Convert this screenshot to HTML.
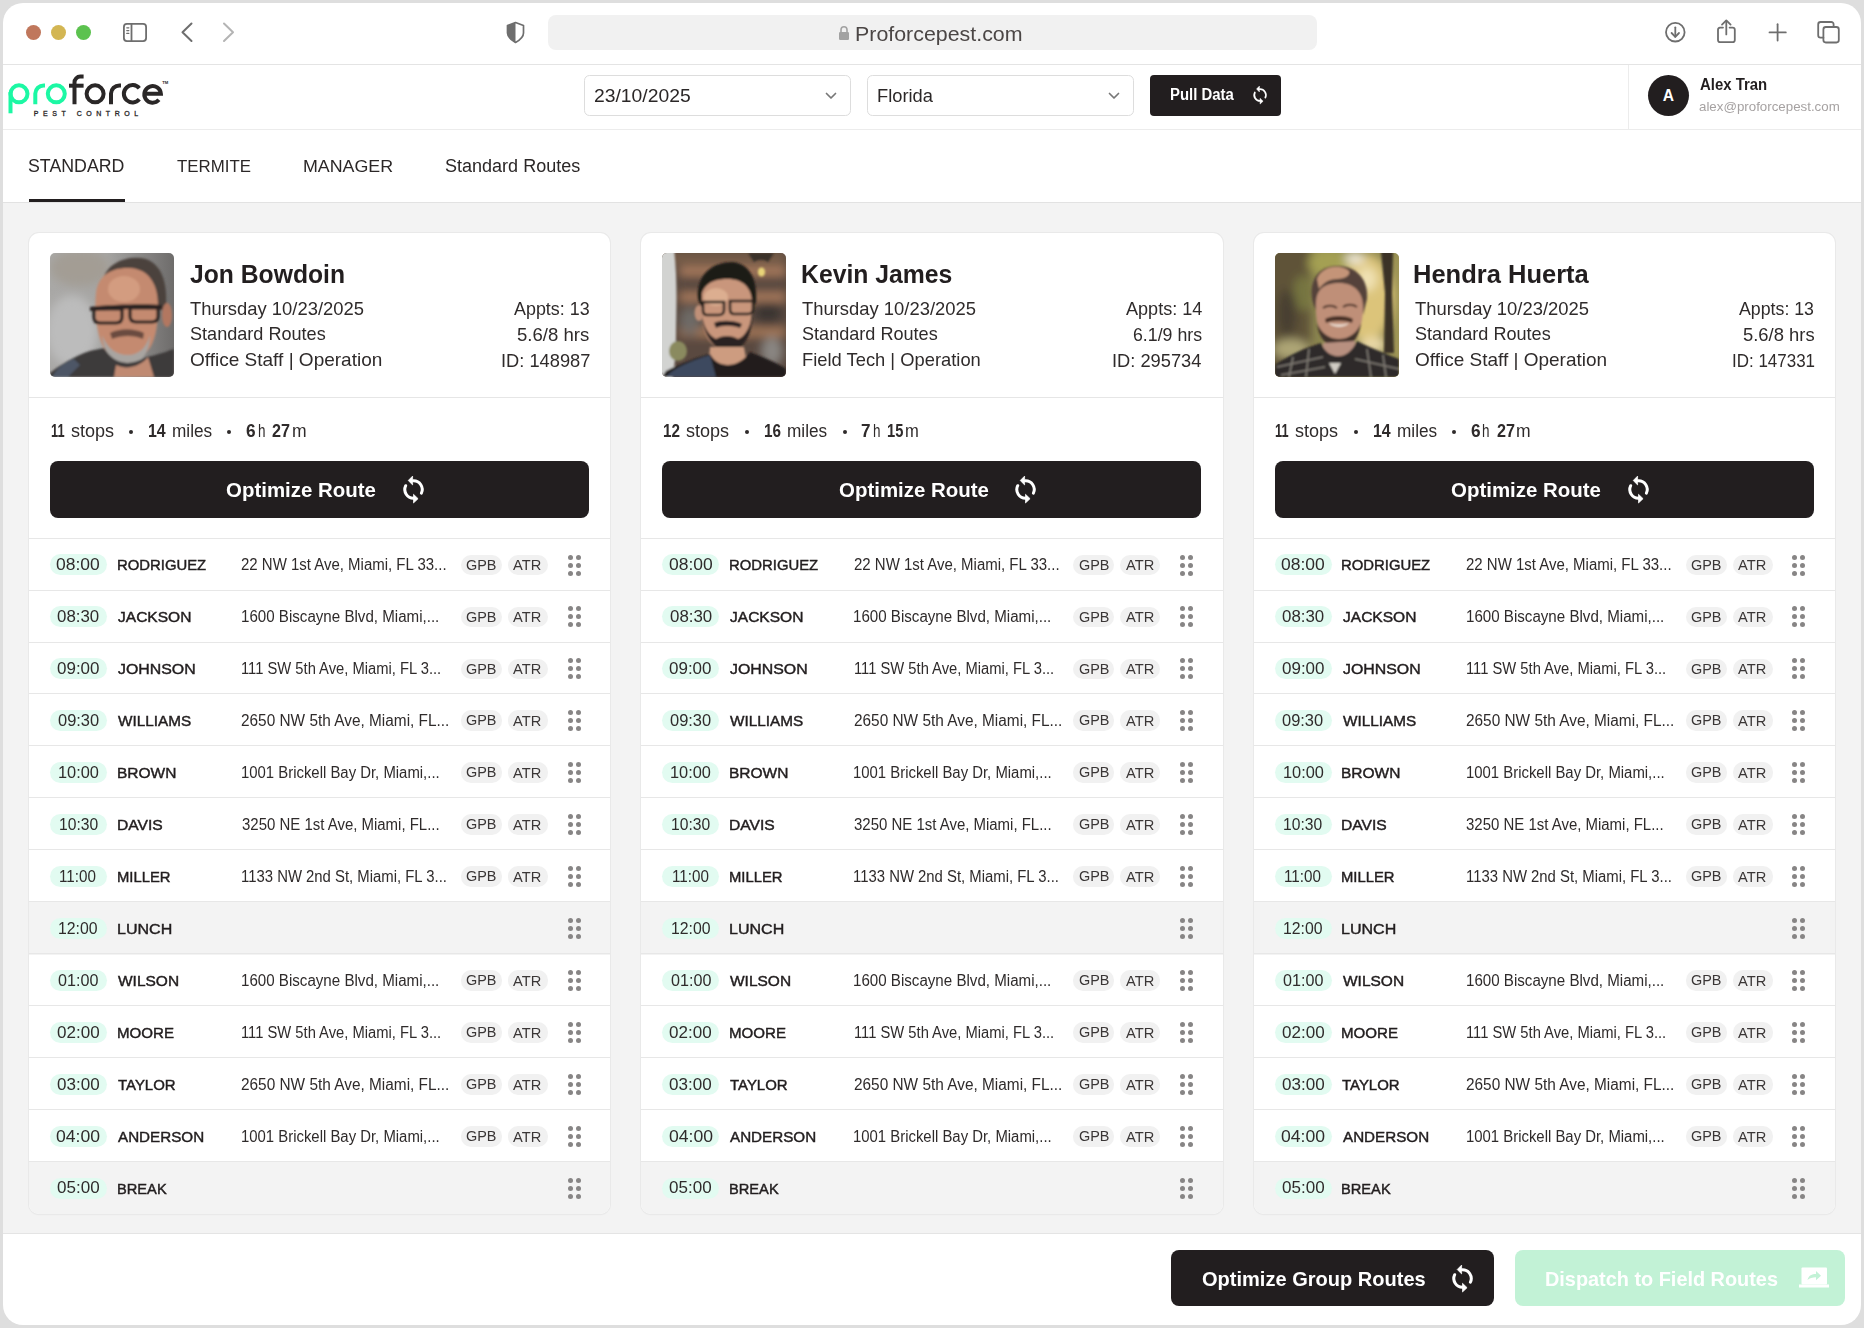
<!DOCTYPE html><html><head><meta charset="utf-8"><style>
*{margin:0;padding:0;box-sizing:border-box}
html,body{width:1864px;height:1328px;overflow:hidden;background:#dedede}
body{position:relative;font-family:"Liberation Sans",sans-serif}
.t{position:absolute;line-height:1;white-space:pre}
.abs{position:absolute}
.win{position:absolute;left:3px;top:3px;width:1858px;height:1322px;border-radius:20px;background:#fff;overflow:hidden}
</style></head><body>
<div class="win"></div>
<div class="abs" style="left:3px;top:64px;width:1858px;height:1px;background:#e4e4e4"></div>
<div class="abs" style="left:26.0px;top:24.5px;width:15px;height:15px;border-radius:50%;background:#c0775c"></div>
<div class="abs" style="left:51.0px;top:24.5px;width:15px;height:15px;border-radius:50%;background:#d3b653"></div>
<div class="abs" style="left:76.0px;top:24.5px;width:15px;height:15px;border-radius:50%;background:#5cc24f"></div>
<svg class="abs" style="left:0;top:0" width="1864" height="64" viewBox="0 0 1864 64" fill="none" stroke="#6e6e6e" stroke-width="1.8" stroke-linecap="round" stroke-linejoin="round">
<rect x="123.9" y="23.9" width="22.2" height="17.2" rx="3"/>
<line x1="131.5" y1="24" x2="131.5" y2="41"/>
<line x1="126.8" y1="27.8" x2="128.8" y2="27.8" stroke-width="1.3"/>
<line x1="126.8" y1="30.6" x2="128.8" y2="30.6" stroke-width="1.3"/>
<line x1="126.8" y1="33.4" x2="128.8" y2="33.4" stroke-width="1.3"/>
<polyline points="191.5,23.5 182.5,32.3 191.5,41" stroke-width="2"/>
<polyline points="224,23.5 233,32.3 224,41" stroke="#b4b4b4" stroke-width="2"/>
<path d="M515.5 22.5 L523.5 25.5 V33 C523.5 37 520 40 515.5 42.5 C511 40 507.5 37 507.5 33 V25.5 Z" stroke-width="1.7"/>
<path d="M515.5 22.5 L507.5 25.5 V33 C507.5 37 511 40 515.5 42.5 Z" fill="#6e6e6e" stroke="none"/>
<path d="M1295.5 28.5 A6.3 6.3 0 1 0 1301.6 33.5" stroke-width="1.5"/>
<polyline points="1297.5,25.2 1300.8,28.4 1297.5,31.4" stroke-width="1.5"/>
<circle cx="1675.3" cy="32.2" r="9.3"/>
<line x1="1675.3" y1="27.3" x2="1675.3" y2="36.8"/>
<polyline points="1671.6,33 1675.3,36.8 1679,33"/>
<path d="M1723 27.6 H1720 A2.2 2.2 0 0 0 1718 29.8 V40 A2.2 2.2 0 0 0 1720.2 42.2 H1732.6 A2.2 2.2 0 0 0 1734.8 40 V29.8 A2.2 2.2 0 0 0 1732.6 27.6 H1729.6"/>
<line x1="1726.3" y1="20.8" x2="1726.3" y2="34.4"/>
<polyline points="1722,24.6 1726.3,20.4 1730.6,24.6"/>
<line x1="1769.5" y1="32.4" x2="1785.8" y2="32.4"/>
<line x1="1777.6" y1="24.2" x2="1777.6" y2="40.6"/>
<path d="M1823.4 37.7 H1820.6 A2.4 2.4 0 0 1 1818.2 35.3 V24.4 A2.4 2.4 0 0 1 1820.6 22 H1831.2 A2.4 2.4 0 0 1 1833.6 24.4 V27"/>
<rect x="1823.4" y="27" width="15.4" height="15.5" rx="2.4"/>
</svg>
<div class="abs" style="left:548px;top:15px;width:769px;height:35px;border-radius:8px;background:#f1f1f1"></div>
<svg class="abs" style="left:838px;top:25px" width="12" height="16" viewBox="0 0 12 16"><path d="M3 7 V4.8 A3 3 0 0 1 9 4.8 V7" fill="none" stroke="#a2a2a2" stroke-width="1.6"/><rect x="1" y="7" width="10" height="8" rx="1.2" fill="#a2a2a2"/></svg>
<div class="t" style="left:855.29px;top:24.26px;font-size:20.6px;font-weight:400;color:#4b4645;transform:scaleX(1.0380);transform-origin:0 0;">Proforcepest.com</div>
<div class="abs" style="left:3px;top:129px;width:1858px;height:1px;background:#ececec"></div>
<div class="abs" style="left:1628px;top:65px;width:1px;height:64px;background:#ececec"></div>
<svg class="abs" style="left:0;top:64px" width="180" height="60" viewBox="0 64 180 60" fill="none" stroke-width="4">
<g stroke="#1cf8a4">
<circle cx="19" cy="93.8" r="8.5"/>
<line x1="10.5" y1="92" x2="10.5" y2="113.3"/>
<path d="M35.3 104.2 V93.5 A8.4 8.4 0 0 1 43.7 85.4 H45"/>
<circle cx="56.3" cy="93.8" r="8.5"/>
</g>
<g stroke="#2a2727">
<path d="M74.5 104.3 V82.5 A5.8 5.8 0 0 1 80.3 76.6 H83.6"/>
<line x1="69" y1="85.7" x2="83.6" y2="85.7"/>
<circle cx="95.1" cy="93.8" r="8.5"/>
<path d="M111 104.2 V93.5 A8.4 8.4 0 0 1 119.4 85.4 H121"/>
<path d="M139.3 88.3 A8.7 8.7 0 1 0 139.3 99.3"/>
<path d="M144.9 93.8 H160.9 A8.3 8.3 0 1 0 158.9 99.8"/>
</g>
</svg>
<div class="t " style="left:33.8px;top:109.87px;font-size:7px;font-weight:400;color:#2a2727;letter-spacing:4.55px;-webkit-text-stroke:0.3px #2a2727">PEST CONTROL</div>
<div class="t " style="left:162.3px;top:81.44px;font-size:4.2px;font-weight:700;color:#2a2727;">TM</div>
<div class="abs" style="left:584px;top:75px;width:267px;height:41px;border:1px solid #dddddd;border-radius:5.5px;background:#fff"></div>
<div class="t" style="left:594.03px;top:86.60px;font-size:18.9px;font-weight:400;color:#2b2727;transform:scaleX(1.0219);transform-origin:0 0;">23/10/2025</div>
<svg class="abs" style="left:825px;top:90.5px" width="12" height="10" viewBox="0 0 12 10"><polyline points="1.5,2.5 6,7 10.5,2.5" fill="none" stroke="#777" stroke-width="1.7" stroke-linecap="round" stroke-linejoin="round"/></svg>
<div class="abs" style="left:867px;top:75px;width:267px;height:41px;border:1px solid #dddddd;border-radius:5.5px;background:#fff"></div>
<div class="t" style="left:876.54px;top:86.60px;font-size:18.9px;font-weight:400;color:#2b2727;transform:scaleX(0.9675);transform-origin:0 0;">Florida</div>
<svg class="abs" style="left:1108px;top:90.5px" width="12" height="10" viewBox="0 0 12 10"><polyline points="1.5,2.5 6,7 10.5,2.5" fill="none" stroke="#777" stroke-width="1.7" stroke-linecap="round" stroke-linejoin="round"/></svg>
<div class="abs" style="left:1150px;top:75px;width:131px;height:41px;border-radius:4px;background:#221e1f"></div>
<div class="t" style="left:1170.11px;top:87.46px;font-size:16px;font-weight:700;color:#fff;transform:scaleX(0.9303);transform-origin:0 0;">Pull Data</div>
<svg width="18.09" height="22.11" viewBox="0 0 27 33" style="position:absolute;left:1251.29px;top:84.06px"><g fill="none" stroke="#fff" stroke-width="2.6" stroke-linecap="round">
<path d="M13.3 7.8 A8.7 8.7 0 0 1 21.4 20.2"/><path d="M5.7 12.7 A8.7 8.7 0 0 0 13.7 25.2"/></g>
<path d="M12.6 3.1 L12.6 11.9 L8.2 7.5 Z" fill="#fff" stroke="#fff" stroke-width="0.7" stroke-linejoin="round"/>
<path d="M13.5 21.3 L13.5 30 L18.1 25.65 Z" fill="#fff" stroke="#fff" stroke-width="0.7" stroke-linejoin="round"/>
</svg>
<div class="abs" style="left:1648px;top:74.5px;width:41px;height:41px;border-radius:50%;background:#221e1f"></div>
<div class="t " style="left:1662.7px;top:88.19px;font-size:15.6px;font-weight:700;color:#fff;">A</div>
<div class="t" style="left:1699.70px;top:77.46px;font-size:16px;font-weight:700;color:#221e1f;transform:scaleX(0.9330);transform-origin:0 0;">Alex Tran</div>
<div class="t" style="left:1699.47px;top:99.83px;font-size:13.2px;font-weight:400;color:#a6a2a2;transform:scaleX(1.0092);transform-origin:0 0;">alex@proforcepest.com</div>
<div class="abs" style="left:3px;top:203px;width:1858px;height:1030px;background:#f3f3f3"></div>
<div class="abs" style="left:3px;top:202px;width:1858px;height:1px;background:#e2e2e2"></div>
<div class="abs" style="left:29px;top:199.3px;width:96px;height:2.7px;background:#221e1f"></div>
<div class="t" style="left:28.29px;top:157.99px;font-size:17.5px;font-weight:400;color:#2b2727;transform:scaleX(1.0158);transform-origin:0 0;">STANDARD</div>
<div class="t" style="left:176.66px;top:158.24px;font-size:17.2px;font-weight:400;color:#2b2727;transform:scaleX(0.9798);transform-origin:0 0;">TERMITE</div>
<div class="t" style="left:302.57px;top:158.07px;font-size:17.4px;font-weight:400;color:#2b2727;transform:scaleX(1.0250);transform-origin:0 0;">MANAGER</div>
<div class="t" style="left:445.28px;top:157.69px;font-size:17.85px;font-weight:400;color:#2b2727;transform:scaleX(1.0097);transform-origin:0 0;">Standard Routes</div>
<div class="abs" style="left:29.0px;top:233px;width:581.33px;height:980.5px;border-radius:10px;background:#fff;box-shadow:0 0 0 1px #e9e9e9,0 0.5px 2px rgba(0,0,0,0.04);overflow:hidden">
<div class="abs" style="left:0;top:668px;width:582px;height:54px;background:#f3f3f3"></div>
<div class="abs" style="left:0;top:928px;width:582px;height:54px;background:#f3f3f3"></div>
</div>
<div class="abs" style="left:29.0px;top:397px;width:581.33px;height:1px;background:#e6e6e6"></div>
<div class="abs" style="left:29.0px;top:538px;width:581.33px;height:1px;background:#e7e7e7"></div>
<div class="abs" style="left:29.0px;top:590px;width:581.33px;height:1px;background:#e7e7e7"></div>
<div class="abs" style="left:29.0px;top:642px;width:581.33px;height:1px;background:#e7e7e7"></div>
<div class="abs" style="left:29.0px;top:693px;width:581.33px;height:1px;background:#e7e7e7"></div>
<div class="abs" style="left:29.0px;top:745px;width:581.33px;height:1px;background:#e7e7e7"></div>
<div class="abs" style="left:29.0px;top:797px;width:581.33px;height:1px;background:#e7e7e7"></div>
<div class="abs" style="left:29.0px;top:849px;width:581.33px;height:1px;background:#e7e7e7"></div>
<div class="abs" style="left:29.0px;top:901px;width:581.33px;height:1px;background:#e7e7e7"></div>
<div class="abs" style="left:29.0px;top:953px;width:581.33px;height:1px;background:#e7e7e7"></div>
<div class="abs" style="left:29.0px;top:1005px;width:581.33px;height:1px;background:#e7e7e7"></div>
<div class="abs" style="left:29.0px;top:1057px;width:581.33px;height:1px;background:#e7e7e7"></div>
<div class="abs" style="left:29.0px;top:1109px;width:581.33px;height:1px;background:#e7e7e7"></div>
<div class="abs" style="left:29.0px;top:1161px;width:581.33px;height:1px;background:#e7e7e7"></div>
<svg class="abs" style="left:50.0px;top:253px" width="124" height="124" viewBox="0 0 124 124"><defs><clipPath id="pc0"><rect width="124" height="124" rx="5"/></clipPath><filter id="bl0" x="-20%" y="-20%" width="140%" height="140%"><feGaussianBlur stdDeviation="1.3"/></filter><filter id="bb0" x="-50%" y="-50%" width="200%" height="200%"><feGaussianBlur stdDeviation="5"/></filter></defs><g clip-path="url(#pc0)">
<defs><linearGradient id="g1bg" x1="0" y1="0" x2="1" y2="0"><stop offset="0" stop-color="#a9a8a6"/><stop offset="0.45" stop-color="#a6a5a3"/><stop offset="1" stop-color="#6e6c6b"/></linearGradient></defs>
<rect width="124" height="124" fill="url(#g1bg)"/>
<g filter="url(#bb0)"><ellipse cx="22" cy="78" rx="26" ry="36" fill="#bcbcbc"/><ellipse cx="30" cy="15" rx="30" ry="18" fill="#a39d94"/></g>
<g filter="url(#bl0)">
<path d="M52 30 C56 8 80 2 96 6 C112 12 118 30 116 56 L106 58 C104 36 96 20 80 18 C66 18 56 26 52 36 Z" fill="#4b423e"/>
<ellipse cx="117" cy="62" rx="5" ry="12" fill="#b27760"/>
<path d="M46 40 C48 22 62 14 80 15 C98 16 108 30 108 52 C108 80 104 100 84 108 C66 112 52 100 48 78 C45 64 45 52 46 40 Z" fill="#c48a70"/>
<ellipse cx="74" cy="36" rx="16" ry="13" fill="#d39c80"/>
<path d="M40 54 C50 52 96 50 112 52 L112 56 C96 55 52 57 40 58 Z" fill="#2a2422"/>
<path d="M44 56 H72 V64 C72 68 70 70 66 70 H50 C46 70 44 68 44 64 Z" fill="none" stroke="#2a2422" stroke-width="3.2"/>
<path d="M80 55 H108 V63 C108 67 106 69 102 69 H86 C82 69 80 67 80 63 Z" fill="none" stroke="#2a2422" stroke-width="3.2"/>
<path d="M60 80 C70 75 84 75 94 80 L93 86 C84 82 72 82 62 86 Z" fill="#6a4c40"/>
<path d="M52 82 C54 104 68 114 80 112 C94 110 100 96 100 82 C96 96 88 102 78 102 C66 102 58 96 52 82 Z" fill="#a8a4a0"/>
<path d="M0 120 C10 112 24 104 34 100 C42 97 50 96 54 95 C62 108 76 116 96 104 C108 102 118 98 124 96 L124 124 L0 124 Z" fill="#3c3a3a"/>
<path d="M2 124 C6 116 14 110 24 106 L30 112 L18 124 Z" fill="#4d5666"/>
<path d="M66 112 C78 118 92 112 98 104 L104 124 L64 124 Z" fill="#c08a72"/>
</g>
</g></svg>
<div class="t" style="left:189.75px;top:261.27px;font-size:26.5px;font-weight:700;color:#221e1f;transform:scaleX(0.9321);transform-origin:0 0;">Jon Bowdoin</div>
<div class="t" style="left:190.13px;top:300.02px;font-size:18.4px;font-weight:400;color:#2f2b2b;transform:scaleX(1.0008);transform-origin:0 0;">Thursday 10/23/2025</div>
<div class="t" style="left:189.98px;top:325.42px;font-size:18.4px;font-weight:400;color:#2f2b2b;transform:scaleX(0.9832);transform-origin:0 0;">Standard Routes</div>
<div class="t" style="left:189.94px;top:351.42px;font-size:18.4px;font-weight:400;color:#2f2b2b;transform:scaleX(1.0337);transform-origin:0 0;">Office Staff | Operation</div>
<div class="t" style="left:514.20px;top:300.19px;font-size:18.2px;font-weight:400;color:#2f2b2b;transform:scaleX(0.9838);transform-origin:0 0;">Appts: 13</div>
<div class="t" style="left:517.46px;top:325.59px;font-size:18.2px;font-weight:400;color:#2f2b2b;transform:scaleX(1.0209);transform-origin:0 0;">5.6/8 hrs</div>
<div class="t" style="left:500.55px;top:351.59px;font-size:18.2px;font-weight:400;color:#2f2b2b;transform:scaleX(1.0050);transform-origin:0 0;">ID: 148987</div>
<div class="t" style="left:50.50px;top:421.56px;font-size:18px;font-weight:700;color:#2f2b2b;transform:scaleX(0.7095);transform-origin:0 0;">11</div>
<div class="t" style="left:70.80px;top:421.56px;font-size:18px;font-weight:400;color:#2f2b2b;transform:scaleX(1.0018);transform-origin:0 0;">stops</div>
<div class="t" style="left:148.20px;top:421.56px;font-size:18px;font-weight:700;color:#2f2b2b;transform:scaleX(0.8841);transform-origin:0 0;">14</div>
<div class="t" style="left:171.90px;top:421.56px;font-size:18px;font-weight:400;color:#2f2b2b;transform:scaleX(0.9547);transform-origin:0 0;">miles</div>
<div class="t" style="left:246.00px;top:421.56px;font-size:18px;font-weight:700;color:#2f2b2b;transform:scaleX(0.9590);transform-origin:0 0;">6</div>
<div class="t" style="left:257.80px;top:421.56px;font-size:18px;font-weight:400;color:#2f2b2b;transform:scaleX(0.7492);transform-origin:0 0;">h</div>
<div class="t" style="left:272.00px;top:421.56px;font-size:18px;font-weight:700;color:#2f2b2b;transform:scaleX(0.8990);transform-origin:0 0;">27</div>
<div class="t" style="left:291.60px;top:421.56px;font-size:18px;font-weight:400;color:#2f2b2b;transform:scaleX(0.9737);transform-origin:0 0;">m</div>
<div class="abs" style="left:128.9px;top:429.5px;width:4px;height:4px;border-radius:50%;background:#2f2b2b"></div>
<div class="abs" style="left:227.3px;top:429.5px;width:4px;height:4px;border-radius:50%;background:#2f2b2b"></div>
<div class="abs" style="left:50.0px;top:461px;width:539px;height:57px;border-radius:8px;background:#221e1f"></div>
<div class="t" style="left:226.48px;top:480.40px;font-size:20.2px;font-weight:700;color:#fff;transform:scaleX(1.0129);transform-origin:0 0;">Optimize Route</div>
<svg width="27.00" height="33.00" viewBox="0 0 27 33" style="position:absolute;left:400.00px;top:473.00px"><g fill="none" stroke="#fff" stroke-width="3" stroke-linecap="round">
<path d="M13.3 7.8 A8.7 8.7 0 0 1 21.4 20.2"/><path d="M5.7 12.7 A8.7 8.7 0 0 0 13.7 25.2"/></g>
<path d="M12.6 3.1 L12.6 11.9 L8.2 7.5 Z" fill="#fff" stroke="#fff" stroke-width="0.7" stroke-linejoin="round"/>
<path d="M13.5 21.3 L13.5 30 L18.1 25.65 Z" fill="#fff" stroke="#fff" stroke-width="0.7" stroke-linejoin="round"/>
</svg>
<div class="abs" style="left:50.0px;top:554.40px;width:57px;height:21px;border-radius:11px;background:#e2fbf1"></div>
<div class="t" style="left:56.48px;top:557.09px;font-size:15.6px;font-weight:400;color:#2f2b2b;transform:scaleX(1.1209);transform-origin:0 0;">08:00</div>
<div class="t" style="left:116.81px;top:557.26px;font-size:15.4px;font-weight:400;color:#221e1f;transform:scaleX(0.9659);transform-origin:0 0;-webkit-text-stroke:0.45px #221e1f">RODRIGUEZ</div>
<div class="t" style="left:241.45px;top:557.09px;font-size:15.6px;font-weight:400;color:#2f2b2b;transform:scaleX(0.9605);transform-origin:0 0;">22 NW 1st Ave, Miami, FL 33...</div>
<div class="abs" style="left:461.0px;top:554.60px;width:41px;height:20.5px;border-radius:10px;background:#f1f1f1"></div>
<div class="t" style="left:466.18px;top:558.62px;font-size:13.8px;font-weight:400;color:#3a3636;transform:scaleX(1.0466);transform-origin:0 0;">GPB</div>
<div class="abs" style="left:508.0px;top:554.60px;width:40px;height:20.5px;border-radius:10px;background:#f1f1f1"></div>
<div class="t" style="left:513.40px;top:558.20px;font-size:14.3px;font-weight:400;color:#3a3636;transform:scaleX(1.0247);transform-origin:0 0;">ATR</div>
<div class="abs" style="left:567.5px;top:554.50px;width:5px;height:5px;border-radius:50%;background:#878585"></div>
<div class="abs" style="left:567.5px;top:562.50px;width:5px;height:5px;border-radius:50%;background:#878585"></div>
<div class="abs" style="left:567.5px;top:570.50px;width:5px;height:5px;border-radius:50%;background:#878585"></div>
<div class="abs" style="left:575.5px;top:554.50px;width:5px;height:5px;border-radius:50%;background:#878585"></div>
<div class="abs" style="left:575.5px;top:562.50px;width:5px;height:5px;border-radius:50%;background:#878585"></div>
<div class="abs" style="left:575.5px;top:570.50px;width:5px;height:5px;border-radius:50%;background:#878585"></div>
<div class="abs" style="left:50.0px;top:606.35px;width:57px;height:21px;border-radius:11px;background:#e2fbf1"></div>
<div class="t" style="left:57.19px;top:609.04px;font-size:15.6px;font-weight:400;color:#2f2b2b;transform:scaleX(1.0814);transform-origin:0 0;">08:30</div>
<div class="t" style="left:117.84px;top:609.21px;font-size:15.4px;font-weight:400;color:#221e1f;transform:scaleX(1.0102);transform-origin:0 0;-webkit-text-stroke:0.45px #221e1f">JACKSON</div>
<div class="t" style="left:241.14px;top:609.04px;font-size:15.6px;font-weight:400;color:#2f2b2b;transform:scaleX(0.9695);transform-origin:0 0;">1600 Biscayne Blvd, Miami,...</div>
<div class="abs" style="left:461.0px;top:606.55px;width:41px;height:20.5px;border-radius:10px;background:#f1f1f1"></div>
<div class="t" style="left:466.18px;top:610.57px;font-size:13.8px;font-weight:400;color:#3a3636;transform:scaleX(1.0466);transform-origin:0 0;">GPB</div>
<div class="abs" style="left:508.0px;top:606.55px;width:40px;height:20.5px;border-radius:10px;background:#f1f1f1"></div>
<div class="t" style="left:513.40px;top:610.15px;font-size:14.3px;font-weight:400;color:#3a3636;transform:scaleX(1.0247);transform-origin:0 0;">ATR</div>
<div class="abs" style="left:567.5px;top:606.45px;width:5px;height:5px;border-radius:50%;background:#878585"></div>
<div class="abs" style="left:567.5px;top:614.45px;width:5px;height:5px;border-radius:50%;background:#878585"></div>
<div class="abs" style="left:567.5px;top:622.45px;width:5px;height:5px;border-radius:50%;background:#878585"></div>
<div class="abs" style="left:575.5px;top:606.45px;width:5px;height:5px;border-radius:50%;background:#878585"></div>
<div class="abs" style="left:575.5px;top:614.45px;width:5px;height:5px;border-radius:50%;background:#878585"></div>
<div class="abs" style="left:575.5px;top:622.45px;width:5px;height:5px;border-radius:50%;background:#878585"></div>
<div class="abs" style="left:50.0px;top:658.30px;width:57px;height:21px;border-radius:11px;background:#e2fbf1"></div>
<div class="t" style="left:56.89px;top:660.99px;font-size:15.6px;font-weight:400;color:#2f2b2b;transform:scaleX(1.0893);transform-origin:0 0;">09:00</div>
<div class="t" style="left:117.84px;top:661.16px;font-size:15.4px;font-weight:400;color:#221e1f;transform:scaleX(1.0320);transform-origin:0 0;-webkit-text-stroke:0.45px #221e1f">JOHNSON</div>
<div class="t" style="left:241.17px;top:660.99px;font-size:15.6px;font-weight:400;color:#2f2b2b;transform:scaleX(0.9454);transform-origin:0 0;">111 SW 5th Ave, Miami, FL 3...</div>
<div class="abs" style="left:461.0px;top:658.50px;width:41px;height:20.5px;border-radius:10px;background:#f1f1f1"></div>
<div class="t" style="left:466.18px;top:662.52px;font-size:13.8px;font-weight:400;color:#3a3636;transform:scaleX(1.0466);transform-origin:0 0;">GPB</div>
<div class="abs" style="left:508.0px;top:658.50px;width:40px;height:20.5px;border-radius:10px;background:#f1f1f1"></div>
<div class="t" style="left:513.40px;top:662.10px;font-size:14.3px;font-weight:400;color:#3a3636;transform:scaleX(1.0247);transform-origin:0 0;">ATR</div>
<div class="abs" style="left:567.5px;top:658.40px;width:5px;height:5px;border-radius:50%;background:#878585"></div>
<div class="abs" style="left:567.5px;top:666.40px;width:5px;height:5px;border-radius:50%;background:#878585"></div>
<div class="abs" style="left:567.5px;top:674.40px;width:5px;height:5px;border-radius:50%;background:#878585"></div>
<div class="abs" style="left:575.5px;top:658.40px;width:5px;height:5px;border-radius:50%;background:#878585"></div>
<div class="abs" style="left:575.5px;top:666.40px;width:5px;height:5px;border-radius:50%;background:#878585"></div>
<div class="abs" style="left:575.5px;top:674.40px;width:5px;height:5px;border-radius:50%;background:#878585"></div>
<div class="abs" style="left:50.0px;top:710.25px;width:57px;height:21px;border-radius:11px;background:#e2fbf1"></div>
<div class="t" style="left:57.71px;top:712.94px;font-size:15.6px;font-weight:400;color:#2f2b2b;transform:scaleX(1.0551);transform-origin:0 0;">09:30</div>
<div class="t" style="left:118.00px;top:713.11px;font-size:15.4px;font-weight:400;color:#221e1f;transform:scaleX(0.9942);transform-origin:0 0;-webkit-text-stroke:0.45px #221e1f">WILLIAMS</div>
<div class="t" style="left:241.43px;top:712.94px;font-size:15.6px;font-weight:400;color:#2f2b2b;transform:scaleX(0.9868);transform-origin:0 0;">2650 NW 5th Ave, Miami, FL...</div>
<div class="abs" style="left:461.0px;top:710.45px;width:41px;height:20.5px;border-radius:10px;background:#f1f1f1"></div>
<div class="t" style="left:466.18px;top:714.47px;font-size:13.8px;font-weight:400;color:#3a3636;transform:scaleX(1.0466);transform-origin:0 0;">GPB</div>
<div class="abs" style="left:508.0px;top:710.45px;width:40px;height:20.5px;border-radius:10px;background:#f1f1f1"></div>
<div class="t" style="left:513.40px;top:714.05px;font-size:14.3px;font-weight:400;color:#3a3636;transform:scaleX(1.0247);transform-origin:0 0;">ATR</div>
<div class="abs" style="left:567.5px;top:710.35px;width:5px;height:5px;border-radius:50%;background:#878585"></div>
<div class="abs" style="left:567.5px;top:718.35px;width:5px;height:5px;border-radius:50%;background:#878585"></div>
<div class="abs" style="left:567.5px;top:726.35px;width:5px;height:5px;border-radius:50%;background:#878585"></div>
<div class="abs" style="left:575.5px;top:710.35px;width:5px;height:5px;border-radius:50%;background:#878585"></div>
<div class="abs" style="left:575.5px;top:718.35px;width:5px;height:5px;border-radius:50%;background:#878585"></div>
<div class="abs" style="left:575.5px;top:726.35px;width:5px;height:5px;border-radius:50%;background:#878585"></div>
<div class="abs" style="left:50.0px;top:762.20px;width:57px;height:21px;border-radius:11px;background:#e2fbf1"></div>
<div class="t" style="left:57.85px;top:764.89px;font-size:15.6px;font-weight:400;color:#2f2b2b;transform:scaleX(1.0486);transform-origin:0 0;">10:00</div>
<div class="t" style="left:116.76px;top:765.06px;font-size:15.4px;font-weight:400;color:#221e1f;transform:scaleX(1.0073);transform-origin:0 0;-webkit-text-stroke:0.45px #221e1f">BROWN</div>
<div class="t" style="left:241.16px;top:764.89px;font-size:15.6px;font-weight:400;color:#2f2b2b;transform:scaleX(0.9552);transform-origin:0 0;">1001 Brickell Bay Dr, Miami,...</div>
<div class="abs" style="left:461.0px;top:762.40px;width:41px;height:20.5px;border-radius:10px;background:#f1f1f1"></div>
<div class="t" style="left:466.18px;top:766.42px;font-size:13.8px;font-weight:400;color:#3a3636;transform:scaleX(1.0466);transform-origin:0 0;">GPB</div>
<div class="abs" style="left:508.0px;top:762.40px;width:40px;height:20.5px;border-radius:10px;background:#f1f1f1"></div>
<div class="t" style="left:513.40px;top:766.00px;font-size:14.3px;font-weight:400;color:#3a3636;transform:scaleX(1.0247);transform-origin:0 0;">ATR</div>
<div class="abs" style="left:567.5px;top:762.30px;width:5px;height:5px;border-radius:50%;background:#878585"></div>
<div class="abs" style="left:567.5px;top:770.30px;width:5px;height:5px;border-radius:50%;background:#878585"></div>
<div class="abs" style="left:567.5px;top:778.30px;width:5px;height:5px;border-radius:50%;background:#878585"></div>
<div class="abs" style="left:575.5px;top:762.30px;width:5px;height:5px;border-radius:50%;background:#878585"></div>
<div class="abs" style="left:575.5px;top:770.30px;width:5px;height:5px;border-radius:50%;background:#878585"></div>
<div class="abs" style="left:575.5px;top:778.30px;width:5px;height:5px;border-radius:50%;background:#878585"></div>
<div class="abs" style="left:50.0px;top:814.15px;width:57px;height:21px;border-radius:11px;background:#e2fbf1"></div>
<div class="t" style="left:58.60px;top:816.84px;font-size:15.6px;font-weight:400;color:#2f2b2b;transform:scaleX(1.0032);transform-origin:0 0;">10:30</div>
<div class="t" style="left:116.75px;top:817.01px;font-size:15.4px;font-weight:400;color:#221e1f;transform:scaleX(1.0169);transform-origin:0 0;-webkit-text-stroke:0.45px #221e1f">DAVIS</div>
<div class="t" style="left:241.75px;top:816.84px;font-size:15.6px;font-weight:400;color:#2f2b2b;transform:scaleX(0.9596);transform-origin:0 0;">3250 NE 1st Ave, Miami, FL...</div>
<div class="abs" style="left:461.0px;top:814.35px;width:41px;height:20.5px;border-radius:10px;background:#f1f1f1"></div>
<div class="t" style="left:466.18px;top:818.37px;font-size:13.8px;font-weight:400;color:#3a3636;transform:scaleX(1.0466);transform-origin:0 0;">GPB</div>
<div class="abs" style="left:508.0px;top:814.35px;width:40px;height:20.5px;border-radius:10px;background:#f1f1f1"></div>
<div class="t" style="left:513.40px;top:817.95px;font-size:14.3px;font-weight:400;color:#3a3636;transform:scaleX(1.0247);transform-origin:0 0;">ATR</div>
<div class="abs" style="left:567.5px;top:814.25px;width:5px;height:5px;border-radius:50%;background:#878585"></div>
<div class="abs" style="left:567.5px;top:822.25px;width:5px;height:5px;border-radius:50%;background:#878585"></div>
<div class="abs" style="left:567.5px;top:830.25px;width:5px;height:5px;border-radius:50%;background:#878585"></div>
<div class="abs" style="left:575.5px;top:814.25px;width:5px;height:5px;border-radius:50%;background:#878585"></div>
<div class="abs" style="left:575.5px;top:822.25px;width:5px;height:5px;border-radius:50%;background:#878585"></div>
<div class="abs" style="left:575.5px;top:830.25px;width:5px;height:5px;border-radius:50%;background:#878585"></div>
<div class="abs" style="left:50.0px;top:866.10px;width:57px;height:21px;border-radius:11px;background:#e2fbf1"></div>
<div class="t" style="left:59.44px;top:868.79px;font-size:15.6px;font-weight:400;color:#2f2b2b;transform:scaleX(0.9745);transform-origin:0 0;">11:00</div>
<div class="t" style="left:116.81px;top:868.96px;font-size:15.4px;font-weight:400;color:#221e1f;transform:scaleX(0.9619);transform-origin:0 0;-webkit-text-stroke:0.45px #221e1f">MILLER</div>
<div class="t" style="left:241.16px;top:868.79px;font-size:15.6px;font-weight:400;color:#2f2b2b;transform:scaleX(0.9542);transform-origin:0 0;">1133 NW 2nd St, Miami, FL 3...</div>
<div class="abs" style="left:461.0px;top:866.30px;width:41px;height:20.5px;border-radius:10px;background:#f1f1f1"></div>
<div class="t" style="left:466.18px;top:870.32px;font-size:13.8px;font-weight:400;color:#3a3636;transform:scaleX(1.0466);transform-origin:0 0;">GPB</div>
<div class="abs" style="left:508.0px;top:866.30px;width:40px;height:20.5px;border-radius:10px;background:#f1f1f1"></div>
<div class="t" style="left:513.40px;top:869.90px;font-size:14.3px;font-weight:400;color:#3a3636;transform:scaleX(1.0247);transform-origin:0 0;">ATR</div>
<div class="abs" style="left:567.5px;top:866.20px;width:5px;height:5px;border-radius:50%;background:#878585"></div>
<div class="abs" style="left:567.5px;top:874.20px;width:5px;height:5px;border-radius:50%;background:#878585"></div>
<div class="abs" style="left:567.5px;top:882.20px;width:5px;height:5px;border-radius:50%;background:#878585"></div>
<div class="abs" style="left:575.5px;top:866.20px;width:5px;height:5px;border-radius:50%;background:#878585"></div>
<div class="abs" style="left:575.5px;top:874.20px;width:5px;height:5px;border-radius:50%;background:#878585"></div>
<div class="abs" style="left:575.5px;top:882.20px;width:5px;height:5px;border-radius:50%;background:#878585"></div>
<div class="abs" style="left:50.0px;top:918.05px;width:57px;height:21px;border-radius:11px;background:#e2fbf1"></div>
<div class="t" style="left:58.19px;top:920.74px;font-size:15.6px;font-weight:400;color:#2f2b2b;transform:scaleX(1.0139);transform-origin:0 0;">12:00</div>
<div class="t" style="left:116.72px;top:920.91px;font-size:15.4px;font-weight:400;color:#221e1f;transform:scaleX(1.0413);transform-origin:0 0;-webkit-text-stroke:0.45px #221e1f">LUNCH</div>
<div class="abs" style="left:567.5px;top:918.15px;width:5px;height:5px;border-radius:50%;background:#878585"></div>
<div class="abs" style="left:567.5px;top:926.15px;width:5px;height:5px;border-radius:50%;background:#878585"></div>
<div class="abs" style="left:567.5px;top:934.15px;width:5px;height:5px;border-radius:50%;background:#878585"></div>
<div class="abs" style="left:575.5px;top:918.15px;width:5px;height:5px;border-radius:50%;background:#878585"></div>
<div class="abs" style="left:575.5px;top:926.15px;width:5px;height:5px;border-radius:50%;background:#878585"></div>
<div class="abs" style="left:575.5px;top:934.15px;width:5px;height:5px;border-radius:50%;background:#878585"></div>
<div class="abs" style="left:50.0px;top:970.00px;width:57px;height:21px;border-radius:11px;background:#e2fbf1"></div>
<div class="t" style="left:58.42px;top:972.69px;font-size:15.6px;font-weight:400;color:#2f2b2b;transform:scaleX(1.0340);transform-origin:0 0;">01:00</div>
<div class="t" style="left:118.00px;top:972.86px;font-size:15.4px;font-weight:400;color:#221e1f;transform:scaleX(1.0061);transform-origin:0 0;-webkit-text-stroke:0.45px #221e1f">WILSON</div>
<div class="t" style="left:241.14px;top:972.69px;font-size:15.6px;font-weight:400;color:#2f2b2b;transform:scaleX(0.9695);transform-origin:0 0;">1600 Biscayne Blvd, Miami,...</div>
<div class="abs" style="left:461.0px;top:970.20px;width:41px;height:20.5px;border-radius:10px;background:#f1f1f1"></div>
<div class="t" style="left:466.18px;top:974.22px;font-size:13.8px;font-weight:400;color:#3a3636;transform:scaleX(1.0466);transform-origin:0 0;">GPB</div>
<div class="abs" style="left:508.0px;top:970.20px;width:40px;height:20.5px;border-radius:10px;background:#f1f1f1"></div>
<div class="t" style="left:513.40px;top:973.80px;font-size:14.3px;font-weight:400;color:#3a3636;transform:scaleX(1.0247);transform-origin:0 0;">ATR</div>
<div class="abs" style="left:567.5px;top:970.10px;width:5px;height:5px;border-radius:50%;background:#878585"></div>
<div class="abs" style="left:567.5px;top:978.10px;width:5px;height:5px;border-radius:50%;background:#878585"></div>
<div class="abs" style="left:567.5px;top:986.10px;width:5px;height:5px;border-radius:50%;background:#878585"></div>
<div class="abs" style="left:575.5px;top:970.10px;width:5px;height:5px;border-radius:50%;background:#878585"></div>
<div class="abs" style="left:575.5px;top:978.10px;width:5px;height:5px;border-radius:50%;background:#878585"></div>
<div class="abs" style="left:575.5px;top:986.10px;width:5px;height:5px;border-radius:50%;background:#878585"></div>
<div class="abs" style="left:50.0px;top:1021.95px;width:57px;height:21px;border-radius:11px;background:#e2fbf1"></div>
<div class="t" style="left:57.09px;top:1024.64px;font-size:15.6px;font-weight:400;color:#2f2b2b;transform:scaleX(1.0919);transform-origin:0 0;">02:00</div>
<div class="t" style="left:116.79px;top:1024.81px;font-size:15.4px;font-weight:400;color:#221e1f;transform:scaleX(0.9791);transform-origin:0 0;-webkit-text-stroke:0.45px #221e1f">MOORE</div>
<div class="t" style="left:241.17px;top:1024.64px;font-size:15.6px;font-weight:400;color:#2f2b2b;transform:scaleX(0.9454);transform-origin:0 0;">111 SW 5th Ave, Miami, FL 3...</div>
<div class="abs" style="left:461.0px;top:1022.15px;width:41px;height:20.5px;border-radius:10px;background:#f1f1f1"></div>
<div class="t" style="left:466.18px;top:1026.17px;font-size:13.8px;font-weight:400;color:#3a3636;transform:scaleX(1.0466);transform-origin:0 0;">GPB</div>
<div class="abs" style="left:508.0px;top:1022.15px;width:40px;height:20.5px;border-radius:10px;background:#f1f1f1"></div>
<div class="t" style="left:513.40px;top:1025.75px;font-size:14.3px;font-weight:400;color:#3a3636;transform:scaleX(1.0247);transform-origin:0 0;">ATR</div>
<div class="abs" style="left:567.5px;top:1022.05px;width:5px;height:5px;border-radius:50%;background:#878585"></div>
<div class="abs" style="left:567.5px;top:1030.05px;width:5px;height:5px;border-radius:50%;background:#878585"></div>
<div class="abs" style="left:567.5px;top:1038.05px;width:5px;height:5px;border-radius:50%;background:#878585"></div>
<div class="abs" style="left:575.5px;top:1022.05px;width:5px;height:5px;border-radius:50%;background:#878585"></div>
<div class="abs" style="left:575.5px;top:1030.05px;width:5px;height:5px;border-radius:50%;background:#878585"></div>
<div class="abs" style="left:575.5px;top:1038.05px;width:5px;height:5px;border-radius:50%;background:#878585"></div>
<div class="abs" style="left:50.0px;top:1073.90px;width:57px;height:21px;border-radius:11px;background:#e2fbf1"></div>
<div class="t" style="left:57.09px;top:1076.59px;font-size:15.6px;font-weight:400;color:#2f2b2b;transform:scaleX(1.0919);transform-origin:0 0;">03:00</div>
<div class="t" style="left:117.70px;top:1076.76px;font-size:15.4px;font-weight:400;color:#221e1f;transform:scaleX(0.9714);transform-origin:0 0;-webkit-text-stroke:0.45px #221e1f">TAYLOR</div>
<div class="t" style="left:241.43px;top:1076.59px;font-size:15.6px;font-weight:400;color:#2f2b2b;transform:scaleX(0.9868);transform-origin:0 0;">2650 NW 5th Ave, Miami, FL...</div>
<div class="abs" style="left:461.0px;top:1074.10px;width:41px;height:20.5px;border-radius:10px;background:#f1f1f1"></div>
<div class="t" style="left:466.18px;top:1078.12px;font-size:13.8px;font-weight:400;color:#3a3636;transform:scaleX(1.0466);transform-origin:0 0;">GPB</div>
<div class="abs" style="left:508.0px;top:1074.10px;width:40px;height:20.5px;border-radius:10px;background:#f1f1f1"></div>
<div class="t" style="left:513.40px;top:1077.70px;font-size:14.3px;font-weight:400;color:#3a3636;transform:scaleX(1.0247);transform-origin:0 0;">ATR</div>
<div class="abs" style="left:567.5px;top:1074.00px;width:5px;height:5px;border-radius:50%;background:#878585"></div>
<div class="abs" style="left:567.5px;top:1082.00px;width:5px;height:5px;border-radius:50%;background:#878585"></div>
<div class="abs" style="left:567.5px;top:1090.00px;width:5px;height:5px;border-radius:50%;background:#878585"></div>
<div class="abs" style="left:575.5px;top:1074.00px;width:5px;height:5px;border-radius:50%;background:#878585"></div>
<div class="abs" style="left:575.5px;top:1082.00px;width:5px;height:5px;border-radius:50%;background:#878585"></div>
<div class="abs" style="left:575.5px;top:1090.00px;width:5px;height:5px;border-radius:50%;background:#878585"></div>
<div class="abs" style="left:50.0px;top:1125.85px;width:57px;height:21px;border-radius:11px;background:#e2fbf1"></div>
<div class="t" style="left:56.47px;top:1128.54px;font-size:15.6px;font-weight:400;color:#2f2b2b;transform:scaleX(1.1288);transform-origin:0 0;">04:00</div>
<div class="t" style="left:118.00px;top:1128.71px;font-size:15.4px;font-weight:400;color:#221e1f;transform:scaleX(0.9876);transform-origin:0 0;-webkit-text-stroke:0.45px #221e1f">ANDERSON</div>
<div class="t" style="left:241.16px;top:1128.54px;font-size:15.6px;font-weight:400;color:#2f2b2b;transform:scaleX(0.9552);transform-origin:0 0;">1001 Brickell Bay Dr, Miami,...</div>
<div class="abs" style="left:461.0px;top:1126.05px;width:41px;height:20.5px;border-radius:10px;background:#f1f1f1"></div>
<div class="t" style="left:466.18px;top:1130.07px;font-size:13.8px;font-weight:400;color:#3a3636;transform:scaleX(1.0466);transform-origin:0 0;">GPB</div>
<div class="abs" style="left:508.0px;top:1126.05px;width:40px;height:20.5px;border-radius:10px;background:#f1f1f1"></div>
<div class="t" style="left:513.40px;top:1129.65px;font-size:14.3px;font-weight:400;color:#3a3636;transform:scaleX(1.0247);transform-origin:0 0;">ATR</div>
<div class="abs" style="left:567.5px;top:1125.95px;width:5px;height:5px;border-radius:50%;background:#878585"></div>
<div class="abs" style="left:567.5px;top:1133.95px;width:5px;height:5px;border-radius:50%;background:#878585"></div>
<div class="abs" style="left:567.5px;top:1141.95px;width:5px;height:5px;border-radius:50%;background:#878585"></div>
<div class="abs" style="left:575.5px;top:1125.95px;width:5px;height:5px;border-radius:50%;background:#878585"></div>
<div class="abs" style="left:575.5px;top:1133.95px;width:5px;height:5px;border-radius:50%;background:#878585"></div>
<div class="abs" style="left:575.5px;top:1141.95px;width:5px;height:5px;border-radius:50%;background:#878585"></div>
<div class="abs" style="left:50.0px;top:1177.80px;width:57px;height:21px;border-radius:11px;background:#e2fbf1"></div>
<div class="t" style="left:57.09px;top:1180.49px;font-size:15.6px;font-weight:400;color:#2f2b2b;transform:scaleX(1.0919);transform-origin:0 0;">05:00</div>
<div class="t" style="left:116.83px;top:1180.66px;font-size:15.4px;font-weight:400;color:#221e1f;transform:scaleX(0.9515);transform-origin:0 0;-webkit-text-stroke:0.45px #221e1f">BREAK</div>
<div class="abs" style="left:567.5px;top:1177.90px;width:5px;height:5px;border-radius:50%;background:#878585"></div>
<div class="abs" style="left:567.5px;top:1185.90px;width:5px;height:5px;border-radius:50%;background:#878585"></div>
<div class="abs" style="left:567.5px;top:1193.90px;width:5px;height:5px;border-radius:50%;background:#878585"></div>
<div class="abs" style="left:575.5px;top:1177.90px;width:5px;height:5px;border-radius:50%;background:#878585"></div>
<div class="abs" style="left:575.5px;top:1185.90px;width:5px;height:5px;border-radius:50%;background:#878585"></div>
<div class="abs" style="left:575.5px;top:1193.90px;width:5px;height:5px;border-radius:50%;background:#878585"></div>
<div class="abs" style="left:641.33px;top:233px;width:581.33px;height:980.5px;border-radius:10px;background:#fff;box-shadow:0 0 0 1px #e9e9e9,0 0.5px 2px rgba(0,0,0,0.04);overflow:hidden">
<div class="abs" style="left:0;top:668px;width:582px;height:54px;background:#f3f3f3"></div>
<div class="abs" style="left:0;top:928px;width:582px;height:54px;background:#f3f3f3"></div>
</div>
<div class="abs" style="left:641.33px;top:397px;width:581.33px;height:1px;background:#e6e6e6"></div>
<div class="abs" style="left:641.33px;top:538px;width:581.33px;height:1px;background:#e7e7e7"></div>
<div class="abs" style="left:641.33px;top:590px;width:581.33px;height:1px;background:#e7e7e7"></div>
<div class="abs" style="left:641.33px;top:642px;width:581.33px;height:1px;background:#e7e7e7"></div>
<div class="abs" style="left:641.33px;top:693px;width:581.33px;height:1px;background:#e7e7e7"></div>
<div class="abs" style="left:641.33px;top:745px;width:581.33px;height:1px;background:#e7e7e7"></div>
<div class="abs" style="left:641.33px;top:797px;width:581.33px;height:1px;background:#e7e7e7"></div>
<div class="abs" style="left:641.33px;top:849px;width:581.33px;height:1px;background:#e7e7e7"></div>
<div class="abs" style="left:641.33px;top:901px;width:581.33px;height:1px;background:#e7e7e7"></div>
<div class="abs" style="left:641.33px;top:953px;width:581.33px;height:1px;background:#e7e7e7"></div>
<div class="abs" style="left:641.33px;top:1005px;width:581.33px;height:1px;background:#e7e7e7"></div>
<div class="abs" style="left:641.33px;top:1057px;width:581.33px;height:1px;background:#e7e7e7"></div>
<div class="abs" style="left:641.33px;top:1109px;width:581.33px;height:1px;background:#e7e7e7"></div>
<div class="abs" style="left:641.33px;top:1161px;width:581.33px;height:1px;background:#e7e7e7"></div>
<svg class="abs" style="left:662.33px;top:253px" width="124" height="124" viewBox="0 0 124 124"><defs><clipPath id="pc1"><rect width="124" height="124" rx="5"/></clipPath><filter id="bl1" x="-20%" y="-20%" width="140%" height="140%"><feGaussianBlur stdDeviation="1.3"/></filter><filter id="bb1" x="-50%" y="-50%" width="200%" height="200%"><feGaussianBlur stdDeviation="5"/></filter></defs><g clip-path="url(#pc1)">
<rect width="124" height="124" fill="#5a4a40"/>
<g filter="url(#bb1)">
<rect x="14" y="0" width="110" height="124" fill="#5a4a40"/>
<rect x="18" y="14" width="106" height="8" fill="#b08060"/>
<rect x="18" y="40" width="106" height="8" fill="#ad7e5e"/>
<rect x="18" y="75" width="106" height="8" fill="#a87a5a"/>
<ellipse cx="28" cy="68" rx="10" ry="14" fill="#6e6a66"/>
<ellipse cx="106" cy="60" rx="14" ry="10" fill="#3a3533"/>
<ellipse cx="110" cy="98" rx="10" ry="14" fill="#8a8682"/>
<rect x="0" y="0" width="124" height="10" fill="#7a5e4a"/>
</g>
<g filter="url(#bl1)">
<path d="M-4 -4 H12 C16 30 14 60 14 80 C14 100 12 120 10 128 H-4 Z" fill="#d2d3d1"/>
<ellipse cx="16" cy="98" rx="9" ry="10" fill="#8a8a5e"/>
<path d="M86 0 L92 9 C96 6 102 6 106 9 L112 0 Z" fill="#3a302a"/>
<ellipse cx="99.5" cy="19" rx="3.6" ry="4.6" fill="#e8d478"/>
<path d="M36 46 C34 20 52 9 70 9 C86 10 96 24 94 50 L89 54 C87 36 78 28 64 28 C50 28 42 36 40 56 Z" fill="#1f1a19"/>
<ellipse cx="37" cy="60" rx="4.5" ry="8" fill="#c09078"/>
<path d="M40 40 C44 28 56 26 66 26 C80 26 90 34 90 50 C90 72 86 92 66 96 C50 98 42 84 40 66 Z" fill="#c9967c"/>
<ellipse cx="54" cy="44" rx="12" ry="9" fill="#dcae90"/>
<path d="M40 62 C42 86 54 98 66 98 C80 98 90 86 90 62 C88 76 82 84 76 86 C70 82 60 82 54 86 C46 82 42 74 40 62 Z" fill="#2c2422"/>
<path d="M52 70 C58 67 72 67 80 71 L78 75 C70 72 60 72 54 75 Z" fill="#2a2220"/>
<path d="M41 49 H62 V57 C62 60 60 62 57 62 H45 C42 62 41 60 41 57 Z" fill="none" stroke="#28211f" stroke-width="2.6"/>
<path d="M68 48 H91 V56 C91 59 89 61 86 61 H72 C69 61 68 59 68 56 Z" fill="none" stroke="#28211f" stroke-width="2.6"/>
<path d="M48 94 L82 94 L86 116 L46 116 Z" fill="#cd9c80"/>
<path d="M0 124 L4 118 C20 110 36 104 48 101 C56 116 76 116 88 99 C100 104 116 110 124 116 L124 124 Z" fill="#221d1e"/>
<path d="M4 124 C10 116 28 108 48 102 L54 124 Z" fill="#3e4a5e"/>
</g>
</g></svg>
<div class="t" style="left:800.84px;top:261.27px;font-size:26.5px;font-weight:700;color:#221e1f;transform:scaleX(0.9342);transform-origin:0 0;">Kevin James</div>
<div class="t" style="left:802.46px;top:300.02px;font-size:18.4px;font-weight:400;color:#2f2b2b;transform:scaleX(1.0008);transform-origin:0 0;">Thursday 10/23/2025</div>
<div class="t" style="left:802.31px;top:325.42px;font-size:18.4px;font-weight:400;color:#2f2b2b;transform:scaleX(0.9832);transform-origin:0 0;">Standard Routes</div>
<div class="t" style="left:801.56px;top:351.42px;font-size:18.4px;font-weight:400;color:#2f2b2b;transform:scaleX(0.9974);transform-origin:0 0;">Field Tech | Operation</div>
<div class="t" style="left:1125.53px;top:300.19px;font-size:18.2px;font-weight:400;color:#2f2b2b;transform:scaleX(0.9945);transform-origin:0 0;">Appts: 14</div>
<div class="t" style="left:1132.94px;top:325.59px;font-size:18.2px;font-weight:400;color:#2f2b2b;transform:scaleX(0.9760);transform-origin:0 0;">6.1/9 hrs</div>
<div class="t" style="left:1112.48px;top:351.59px;font-size:18.2px;font-weight:400;color:#2f2b2b;transform:scaleX(1.0054);transform-origin:0 0;">ID: 295734</div>
<div class="t" style="left:663.13px;top:421.56px;font-size:18px;font-weight:700;color:#2f2b2b;transform:scaleX(0.8491);transform-origin:0 0;">12</div>
<div class="t" style="left:686.13px;top:421.56px;font-size:18px;font-weight:400;color:#2f2b2b;transform:scaleX(1.0018);transform-origin:0 0;">stops</div>
<div class="t" style="left:764.23px;top:421.56px;font-size:18px;font-weight:700;color:#2f2b2b;transform:scaleX(0.8491);transform-origin:0 0;">16</div>
<div class="t" style="left:787.23px;top:421.56px;font-size:18px;font-weight:400;color:#2f2b2b;transform:scaleX(0.9547);transform-origin:0 0;">miles</div>
<div class="t" style="left:861.43px;top:421.56px;font-size:18px;font-weight:700;color:#2f2b2b;transform:scaleX(0.9490);transform-origin:0 0;">7</div>
<div class="t" style="left:873.13px;top:421.56px;font-size:18px;font-weight:400;color:#2f2b2b;transform:scaleX(0.7492);transform-origin:0 0;">h</div>
<div class="t" style="left:886.63px;top:421.56px;font-size:18px;font-weight:700;color:#2f2b2b;transform:scaleX(0.8141);transform-origin:0 0;">15</div>
<div class="t" style="left:904.73px;top:421.56px;font-size:18px;font-weight:400;color:#2f2b2b;transform:scaleX(0.9204);transform-origin:0 0;">m</div>
<div class="abs" style="left:745.23px;top:429.5px;width:4px;height:4px;border-radius:50%;background:#2f2b2b"></div>
<div class="abs" style="left:842.6300000000001px;top:429.5px;width:4px;height:4px;border-radius:50%;background:#2f2b2b"></div>
<div class="abs" style="left:662.33px;top:461px;width:539px;height:57px;border-radius:8px;background:#221e1f"></div>
<div class="t" style="left:838.81px;top:480.40px;font-size:20.2px;font-weight:700;color:#fff;transform:scaleX(1.0129);transform-origin:0 0;">Optimize Route</div>
<svg width="27.00" height="33.00" viewBox="0 0 27 33" style="position:absolute;left:1012.33px;top:473.00px"><g fill="none" stroke="#fff" stroke-width="3" stroke-linecap="round">
<path d="M13.3 7.8 A8.7 8.7 0 0 1 21.4 20.2"/><path d="M5.7 12.7 A8.7 8.7 0 0 0 13.7 25.2"/></g>
<path d="M12.6 3.1 L12.6 11.9 L8.2 7.5 Z" fill="#fff" stroke="#fff" stroke-width="0.7" stroke-linejoin="round"/>
<path d="M13.5 21.3 L13.5 30 L18.1 25.65 Z" fill="#fff" stroke="#fff" stroke-width="0.7" stroke-linejoin="round"/>
</svg>
<div class="abs" style="left:662.33px;top:554.40px;width:57px;height:21px;border-radius:11px;background:#e2fbf1"></div>
<div class="t" style="left:668.81px;top:557.09px;font-size:15.6px;font-weight:400;color:#2f2b2b;transform:scaleX(1.1209);transform-origin:0 0;">08:00</div>
<div class="t" style="left:729.14px;top:557.26px;font-size:15.4px;font-weight:400;color:#221e1f;transform:scaleX(0.9659);transform-origin:0 0;-webkit-text-stroke:0.45px #221e1f">RODRIGUEZ</div>
<div class="t" style="left:853.78px;top:557.09px;font-size:15.6px;font-weight:400;color:#2f2b2b;transform:scaleX(0.9605);transform-origin:0 0;">22 NW 1st Ave, Miami, FL 33...</div>
<div class="abs" style="left:1073.33px;top:554.60px;width:41px;height:20.5px;border-radius:10px;background:#f1f1f1"></div>
<div class="t" style="left:1078.51px;top:558.62px;font-size:13.8px;font-weight:400;color:#3a3636;transform:scaleX(1.0466);transform-origin:0 0;">GPB</div>
<div class="abs" style="left:1120.33px;top:554.60px;width:40px;height:20.5px;border-radius:10px;background:#f1f1f1"></div>
<div class="t" style="left:1125.73px;top:558.20px;font-size:14.3px;font-weight:400;color:#3a3636;transform:scaleX(1.0247);transform-origin:0 0;">ATR</div>
<div class="abs" style="left:1179.83px;top:554.50px;width:5px;height:5px;border-radius:50%;background:#878585"></div>
<div class="abs" style="left:1179.83px;top:562.50px;width:5px;height:5px;border-radius:50%;background:#878585"></div>
<div class="abs" style="left:1179.83px;top:570.50px;width:5px;height:5px;border-radius:50%;background:#878585"></div>
<div class="abs" style="left:1187.83px;top:554.50px;width:5px;height:5px;border-radius:50%;background:#878585"></div>
<div class="abs" style="left:1187.83px;top:562.50px;width:5px;height:5px;border-radius:50%;background:#878585"></div>
<div class="abs" style="left:1187.83px;top:570.50px;width:5px;height:5px;border-radius:50%;background:#878585"></div>
<div class="abs" style="left:662.33px;top:606.35px;width:57px;height:21px;border-radius:11px;background:#e2fbf1"></div>
<div class="t" style="left:669.52px;top:609.04px;font-size:15.6px;font-weight:400;color:#2f2b2b;transform:scaleX(1.0814);transform-origin:0 0;">08:30</div>
<div class="t" style="left:730.17px;top:609.21px;font-size:15.4px;font-weight:400;color:#221e1f;transform:scaleX(1.0102);transform-origin:0 0;-webkit-text-stroke:0.45px #221e1f">JACKSON</div>
<div class="t" style="left:853.47px;top:609.04px;font-size:15.6px;font-weight:400;color:#2f2b2b;transform:scaleX(0.9695);transform-origin:0 0;">1600 Biscayne Blvd, Miami,...</div>
<div class="abs" style="left:1073.33px;top:606.55px;width:41px;height:20.5px;border-radius:10px;background:#f1f1f1"></div>
<div class="t" style="left:1078.51px;top:610.57px;font-size:13.8px;font-weight:400;color:#3a3636;transform:scaleX(1.0466);transform-origin:0 0;">GPB</div>
<div class="abs" style="left:1120.33px;top:606.55px;width:40px;height:20.5px;border-radius:10px;background:#f1f1f1"></div>
<div class="t" style="left:1125.73px;top:610.15px;font-size:14.3px;font-weight:400;color:#3a3636;transform:scaleX(1.0247);transform-origin:0 0;">ATR</div>
<div class="abs" style="left:1179.83px;top:606.45px;width:5px;height:5px;border-radius:50%;background:#878585"></div>
<div class="abs" style="left:1179.83px;top:614.45px;width:5px;height:5px;border-radius:50%;background:#878585"></div>
<div class="abs" style="left:1179.83px;top:622.45px;width:5px;height:5px;border-radius:50%;background:#878585"></div>
<div class="abs" style="left:1187.83px;top:606.45px;width:5px;height:5px;border-radius:50%;background:#878585"></div>
<div class="abs" style="left:1187.83px;top:614.45px;width:5px;height:5px;border-radius:50%;background:#878585"></div>
<div class="abs" style="left:1187.83px;top:622.45px;width:5px;height:5px;border-radius:50%;background:#878585"></div>
<div class="abs" style="left:662.33px;top:658.30px;width:57px;height:21px;border-radius:11px;background:#e2fbf1"></div>
<div class="t" style="left:669.22px;top:660.99px;font-size:15.6px;font-weight:400;color:#2f2b2b;transform:scaleX(1.0893);transform-origin:0 0;">09:00</div>
<div class="t" style="left:730.17px;top:661.16px;font-size:15.4px;font-weight:400;color:#221e1f;transform:scaleX(1.0320);transform-origin:0 0;-webkit-text-stroke:0.45px #221e1f">JOHNSON</div>
<div class="t" style="left:853.50px;top:660.99px;font-size:15.6px;font-weight:400;color:#2f2b2b;transform:scaleX(0.9454);transform-origin:0 0;">111 SW 5th Ave, Miami, FL 3...</div>
<div class="abs" style="left:1073.33px;top:658.50px;width:41px;height:20.5px;border-radius:10px;background:#f1f1f1"></div>
<div class="t" style="left:1078.51px;top:662.52px;font-size:13.8px;font-weight:400;color:#3a3636;transform:scaleX(1.0466);transform-origin:0 0;">GPB</div>
<div class="abs" style="left:1120.33px;top:658.50px;width:40px;height:20.5px;border-radius:10px;background:#f1f1f1"></div>
<div class="t" style="left:1125.73px;top:662.10px;font-size:14.3px;font-weight:400;color:#3a3636;transform:scaleX(1.0247);transform-origin:0 0;">ATR</div>
<div class="abs" style="left:1179.83px;top:658.40px;width:5px;height:5px;border-radius:50%;background:#878585"></div>
<div class="abs" style="left:1179.83px;top:666.40px;width:5px;height:5px;border-radius:50%;background:#878585"></div>
<div class="abs" style="left:1179.83px;top:674.40px;width:5px;height:5px;border-radius:50%;background:#878585"></div>
<div class="abs" style="left:1187.83px;top:658.40px;width:5px;height:5px;border-radius:50%;background:#878585"></div>
<div class="abs" style="left:1187.83px;top:666.40px;width:5px;height:5px;border-radius:50%;background:#878585"></div>
<div class="abs" style="left:1187.83px;top:674.40px;width:5px;height:5px;border-radius:50%;background:#878585"></div>
<div class="abs" style="left:662.33px;top:710.25px;width:57px;height:21px;border-radius:11px;background:#e2fbf1"></div>
<div class="t" style="left:670.04px;top:712.94px;font-size:15.6px;font-weight:400;color:#2f2b2b;transform:scaleX(1.0551);transform-origin:0 0;">09:30</div>
<div class="t" style="left:730.33px;top:713.11px;font-size:15.4px;font-weight:400;color:#221e1f;transform:scaleX(0.9942);transform-origin:0 0;-webkit-text-stroke:0.45px #221e1f">WILLIAMS</div>
<div class="t" style="left:853.76px;top:712.94px;font-size:15.6px;font-weight:400;color:#2f2b2b;transform:scaleX(0.9868);transform-origin:0 0;">2650 NW 5th Ave, Miami, FL...</div>
<div class="abs" style="left:1073.33px;top:710.45px;width:41px;height:20.5px;border-radius:10px;background:#f1f1f1"></div>
<div class="t" style="left:1078.51px;top:714.47px;font-size:13.8px;font-weight:400;color:#3a3636;transform:scaleX(1.0466);transform-origin:0 0;">GPB</div>
<div class="abs" style="left:1120.33px;top:710.45px;width:40px;height:20.5px;border-radius:10px;background:#f1f1f1"></div>
<div class="t" style="left:1125.73px;top:714.05px;font-size:14.3px;font-weight:400;color:#3a3636;transform:scaleX(1.0247);transform-origin:0 0;">ATR</div>
<div class="abs" style="left:1179.83px;top:710.35px;width:5px;height:5px;border-radius:50%;background:#878585"></div>
<div class="abs" style="left:1179.83px;top:718.35px;width:5px;height:5px;border-radius:50%;background:#878585"></div>
<div class="abs" style="left:1179.83px;top:726.35px;width:5px;height:5px;border-radius:50%;background:#878585"></div>
<div class="abs" style="left:1187.83px;top:710.35px;width:5px;height:5px;border-radius:50%;background:#878585"></div>
<div class="abs" style="left:1187.83px;top:718.35px;width:5px;height:5px;border-radius:50%;background:#878585"></div>
<div class="abs" style="left:1187.83px;top:726.35px;width:5px;height:5px;border-radius:50%;background:#878585"></div>
<div class="abs" style="left:662.33px;top:762.20px;width:57px;height:21px;border-radius:11px;background:#e2fbf1"></div>
<div class="t" style="left:670.18px;top:764.89px;font-size:15.6px;font-weight:400;color:#2f2b2b;transform:scaleX(1.0486);transform-origin:0 0;">10:00</div>
<div class="t" style="left:729.09px;top:765.06px;font-size:15.4px;font-weight:400;color:#221e1f;transform:scaleX(1.0073);transform-origin:0 0;-webkit-text-stroke:0.45px #221e1f">BROWN</div>
<div class="t" style="left:853.49px;top:764.89px;font-size:15.6px;font-weight:400;color:#2f2b2b;transform:scaleX(0.9552);transform-origin:0 0;">1001 Brickell Bay Dr, Miami,...</div>
<div class="abs" style="left:1073.33px;top:762.40px;width:41px;height:20.5px;border-radius:10px;background:#f1f1f1"></div>
<div class="t" style="left:1078.51px;top:766.42px;font-size:13.8px;font-weight:400;color:#3a3636;transform:scaleX(1.0466);transform-origin:0 0;">GPB</div>
<div class="abs" style="left:1120.33px;top:762.40px;width:40px;height:20.5px;border-radius:10px;background:#f1f1f1"></div>
<div class="t" style="left:1125.73px;top:766.00px;font-size:14.3px;font-weight:400;color:#3a3636;transform:scaleX(1.0247);transform-origin:0 0;">ATR</div>
<div class="abs" style="left:1179.83px;top:762.30px;width:5px;height:5px;border-radius:50%;background:#878585"></div>
<div class="abs" style="left:1179.83px;top:770.30px;width:5px;height:5px;border-radius:50%;background:#878585"></div>
<div class="abs" style="left:1179.83px;top:778.30px;width:5px;height:5px;border-radius:50%;background:#878585"></div>
<div class="abs" style="left:1187.83px;top:762.30px;width:5px;height:5px;border-radius:50%;background:#878585"></div>
<div class="abs" style="left:1187.83px;top:770.30px;width:5px;height:5px;border-radius:50%;background:#878585"></div>
<div class="abs" style="left:1187.83px;top:778.30px;width:5px;height:5px;border-radius:50%;background:#878585"></div>
<div class="abs" style="left:662.33px;top:814.15px;width:57px;height:21px;border-radius:11px;background:#e2fbf1"></div>
<div class="t" style="left:670.93px;top:816.84px;font-size:15.6px;font-weight:400;color:#2f2b2b;transform:scaleX(1.0032);transform-origin:0 0;">10:30</div>
<div class="t" style="left:729.08px;top:817.01px;font-size:15.4px;font-weight:400;color:#221e1f;transform:scaleX(1.0169);transform-origin:0 0;-webkit-text-stroke:0.45px #221e1f">DAVIS</div>
<div class="t" style="left:854.08px;top:816.84px;font-size:15.6px;font-weight:400;color:#2f2b2b;transform:scaleX(0.9596);transform-origin:0 0;">3250 NE 1st Ave, Miami, FL...</div>
<div class="abs" style="left:1073.33px;top:814.35px;width:41px;height:20.5px;border-radius:10px;background:#f1f1f1"></div>
<div class="t" style="left:1078.51px;top:818.37px;font-size:13.8px;font-weight:400;color:#3a3636;transform:scaleX(1.0466);transform-origin:0 0;">GPB</div>
<div class="abs" style="left:1120.33px;top:814.35px;width:40px;height:20.5px;border-radius:10px;background:#f1f1f1"></div>
<div class="t" style="left:1125.73px;top:817.95px;font-size:14.3px;font-weight:400;color:#3a3636;transform:scaleX(1.0247);transform-origin:0 0;">ATR</div>
<div class="abs" style="left:1179.83px;top:814.25px;width:5px;height:5px;border-radius:50%;background:#878585"></div>
<div class="abs" style="left:1179.83px;top:822.25px;width:5px;height:5px;border-radius:50%;background:#878585"></div>
<div class="abs" style="left:1179.83px;top:830.25px;width:5px;height:5px;border-radius:50%;background:#878585"></div>
<div class="abs" style="left:1187.83px;top:814.25px;width:5px;height:5px;border-radius:50%;background:#878585"></div>
<div class="abs" style="left:1187.83px;top:822.25px;width:5px;height:5px;border-radius:50%;background:#878585"></div>
<div class="abs" style="left:1187.83px;top:830.25px;width:5px;height:5px;border-radius:50%;background:#878585"></div>
<div class="abs" style="left:662.33px;top:866.10px;width:57px;height:21px;border-radius:11px;background:#e2fbf1"></div>
<div class="t" style="left:671.77px;top:868.79px;font-size:15.6px;font-weight:400;color:#2f2b2b;transform:scaleX(0.9745);transform-origin:0 0;">11:00</div>
<div class="t" style="left:729.14px;top:868.96px;font-size:15.4px;font-weight:400;color:#221e1f;transform:scaleX(0.9619);transform-origin:0 0;-webkit-text-stroke:0.45px #221e1f">MILLER</div>
<div class="t" style="left:853.49px;top:868.79px;font-size:15.6px;font-weight:400;color:#2f2b2b;transform:scaleX(0.9542);transform-origin:0 0;">1133 NW 2nd St, Miami, FL 3...</div>
<div class="abs" style="left:1073.33px;top:866.30px;width:41px;height:20.5px;border-radius:10px;background:#f1f1f1"></div>
<div class="t" style="left:1078.51px;top:870.32px;font-size:13.8px;font-weight:400;color:#3a3636;transform:scaleX(1.0466);transform-origin:0 0;">GPB</div>
<div class="abs" style="left:1120.33px;top:866.30px;width:40px;height:20.5px;border-radius:10px;background:#f1f1f1"></div>
<div class="t" style="left:1125.73px;top:869.90px;font-size:14.3px;font-weight:400;color:#3a3636;transform:scaleX(1.0247);transform-origin:0 0;">ATR</div>
<div class="abs" style="left:1179.83px;top:866.20px;width:5px;height:5px;border-radius:50%;background:#878585"></div>
<div class="abs" style="left:1179.83px;top:874.20px;width:5px;height:5px;border-radius:50%;background:#878585"></div>
<div class="abs" style="left:1179.83px;top:882.20px;width:5px;height:5px;border-radius:50%;background:#878585"></div>
<div class="abs" style="left:1187.83px;top:866.20px;width:5px;height:5px;border-radius:50%;background:#878585"></div>
<div class="abs" style="left:1187.83px;top:874.20px;width:5px;height:5px;border-radius:50%;background:#878585"></div>
<div class="abs" style="left:1187.83px;top:882.20px;width:5px;height:5px;border-radius:50%;background:#878585"></div>
<div class="abs" style="left:662.33px;top:918.05px;width:57px;height:21px;border-radius:11px;background:#e2fbf1"></div>
<div class="t" style="left:670.52px;top:920.74px;font-size:15.6px;font-weight:400;color:#2f2b2b;transform:scaleX(1.0139);transform-origin:0 0;">12:00</div>
<div class="t" style="left:729.05px;top:920.91px;font-size:15.4px;font-weight:400;color:#221e1f;transform:scaleX(1.0413);transform-origin:0 0;-webkit-text-stroke:0.45px #221e1f">LUNCH</div>
<div class="abs" style="left:1179.83px;top:918.15px;width:5px;height:5px;border-radius:50%;background:#878585"></div>
<div class="abs" style="left:1179.83px;top:926.15px;width:5px;height:5px;border-radius:50%;background:#878585"></div>
<div class="abs" style="left:1179.83px;top:934.15px;width:5px;height:5px;border-radius:50%;background:#878585"></div>
<div class="abs" style="left:1187.83px;top:918.15px;width:5px;height:5px;border-radius:50%;background:#878585"></div>
<div class="abs" style="left:1187.83px;top:926.15px;width:5px;height:5px;border-radius:50%;background:#878585"></div>
<div class="abs" style="left:1187.83px;top:934.15px;width:5px;height:5px;border-radius:50%;background:#878585"></div>
<div class="abs" style="left:662.33px;top:970.00px;width:57px;height:21px;border-radius:11px;background:#e2fbf1"></div>
<div class="t" style="left:670.75px;top:972.69px;font-size:15.6px;font-weight:400;color:#2f2b2b;transform:scaleX(1.0340);transform-origin:0 0;">01:00</div>
<div class="t" style="left:730.33px;top:972.86px;font-size:15.4px;font-weight:400;color:#221e1f;transform:scaleX(1.0061);transform-origin:0 0;-webkit-text-stroke:0.45px #221e1f">WILSON</div>
<div class="t" style="left:853.47px;top:972.69px;font-size:15.6px;font-weight:400;color:#2f2b2b;transform:scaleX(0.9695);transform-origin:0 0;">1600 Biscayne Blvd, Miami,...</div>
<div class="abs" style="left:1073.33px;top:970.20px;width:41px;height:20.5px;border-radius:10px;background:#f1f1f1"></div>
<div class="t" style="left:1078.51px;top:974.22px;font-size:13.8px;font-weight:400;color:#3a3636;transform:scaleX(1.0466);transform-origin:0 0;">GPB</div>
<div class="abs" style="left:1120.33px;top:970.20px;width:40px;height:20.5px;border-radius:10px;background:#f1f1f1"></div>
<div class="t" style="left:1125.73px;top:973.80px;font-size:14.3px;font-weight:400;color:#3a3636;transform:scaleX(1.0247);transform-origin:0 0;">ATR</div>
<div class="abs" style="left:1179.83px;top:970.10px;width:5px;height:5px;border-radius:50%;background:#878585"></div>
<div class="abs" style="left:1179.83px;top:978.10px;width:5px;height:5px;border-radius:50%;background:#878585"></div>
<div class="abs" style="left:1179.83px;top:986.10px;width:5px;height:5px;border-radius:50%;background:#878585"></div>
<div class="abs" style="left:1187.83px;top:970.10px;width:5px;height:5px;border-radius:50%;background:#878585"></div>
<div class="abs" style="left:1187.83px;top:978.10px;width:5px;height:5px;border-radius:50%;background:#878585"></div>
<div class="abs" style="left:1187.83px;top:986.10px;width:5px;height:5px;border-radius:50%;background:#878585"></div>
<div class="abs" style="left:662.33px;top:1021.95px;width:57px;height:21px;border-radius:11px;background:#e2fbf1"></div>
<div class="t" style="left:669.42px;top:1024.64px;font-size:15.6px;font-weight:400;color:#2f2b2b;transform:scaleX(1.0919);transform-origin:0 0;">02:00</div>
<div class="t" style="left:729.12px;top:1024.81px;font-size:15.4px;font-weight:400;color:#221e1f;transform:scaleX(0.9791);transform-origin:0 0;-webkit-text-stroke:0.45px #221e1f">MOORE</div>
<div class="t" style="left:853.50px;top:1024.64px;font-size:15.6px;font-weight:400;color:#2f2b2b;transform:scaleX(0.9454);transform-origin:0 0;">111 SW 5th Ave, Miami, FL 3...</div>
<div class="abs" style="left:1073.33px;top:1022.15px;width:41px;height:20.5px;border-radius:10px;background:#f1f1f1"></div>
<div class="t" style="left:1078.51px;top:1026.17px;font-size:13.8px;font-weight:400;color:#3a3636;transform:scaleX(1.0466);transform-origin:0 0;">GPB</div>
<div class="abs" style="left:1120.33px;top:1022.15px;width:40px;height:20.5px;border-radius:10px;background:#f1f1f1"></div>
<div class="t" style="left:1125.73px;top:1025.75px;font-size:14.3px;font-weight:400;color:#3a3636;transform:scaleX(1.0247);transform-origin:0 0;">ATR</div>
<div class="abs" style="left:1179.83px;top:1022.05px;width:5px;height:5px;border-radius:50%;background:#878585"></div>
<div class="abs" style="left:1179.83px;top:1030.05px;width:5px;height:5px;border-radius:50%;background:#878585"></div>
<div class="abs" style="left:1179.83px;top:1038.05px;width:5px;height:5px;border-radius:50%;background:#878585"></div>
<div class="abs" style="left:1187.83px;top:1022.05px;width:5px;height:5px;border-radius:50%;background:#878585"></div>
<div class="abs" style="left:1187.83px;top:1030.05px;width:5px;height:5px;border-radius:50%;background:#878585"></div>
<div class="abs" style="left:1187.83px;top:1038.05px;width:5px;height:5px;border-radius:50%;background:#878585"></div>
<div class="abs" style="left:662.33px;top:1073.90px;width:57px;height:21px;border-radius:11px;background:#e2fbf1"></div>
<div class="t" style="left:669.42px;top:1076.59px;font-size:15.6px;font-weight:400;color:#2f2b2b;transform:scaleX(1.0919);transform-origin:0 0;">03:00</div>
<div class="t" style="left:730.03px;top:1076.76px;font-size:15.4px;font-weight:400;color:#221e1f;transform:scaleX(0.9714);transform-origin:0 0;-webkit-text-stroke:0.45px #221e1f">TAYLOR</div>
<div class="t" style="left:853.76px;top:1076.59px;font-size:15.6px;font-weight:400;color:#2f2b2b;transform:scaleX(0.9868);transform-origin:0 0;">2650 NW 5th Ave, Miami, FL...</div>
<div class="abs" style="left:1073.33px;top:1074.10px;width:41px;height:20.5px;border-radius:10px;background:#f1f1f1"></div>
<div class="t" style="left:1078.51px;top:1078.12px;font-size:13.8px;font-weight:400;color:#3a3636;transform:scaleX(1.0466);transform-origin:0 0;">GPB</div>
<div class="abs" style="left:1120.33px;top:1074.10px;width:40px;height:20.5px;border-radius:10px;background:#f1f1f1"></div>
<div class="t" style="left:1125.73px;top:1077.70px;font-size:14.3px;font-weight:400;color:#3a3636;transform:scaleX(1.0247);transform-origin:0 0;">ATR</div>
<div class="abs" style="left:1179.83px;top:1074.00px;width:5px;height:5px;border-radius:50%;background:#878585"></div>
<div class="abs" style="left:1179.83px;top:1082.00px;width:5px;height:5px;border-radius:50%;background:#878585"></div>
<div class="abs" style="left:1179.83px;top:1090.00px;width:5px;height:5px;border-radius:50%;background:#878585"></div>
<div class="abs" style="left:1187.83px;top:1074.00px;width:5px;height:5px;border-radius:50%;background:#878585"></div>
<div class="abs" style="left:1187.83px;top:1082.00px;width:5px;height:5px;border-radius:50%;background:#878585"></div>
<div class="abs" style="left:1187.83px;top:1090.00px;width:5px;height:5px;border-radius:50%;background:#878585"></div>
<div class="abs" style="left:662.33px;top:1125.85px;width:57px;height:21px;border-radius:11px;background:#e2fbf1"></div>
<div class="t" style="left:668.80px;top:1128.54px;font-size:15.6px;font-weight:400;color:#2f2b2b;transform:scaleX(1.1288);transform-origin:0 0;">04:00</div>
<div class="t" style="left:730.33px;top:1128.71px;font-size:15.4px;font-weight:400;color:#221e1f;transform:scaleX(0.9876);transform-origin:0 0;-webkit-text-stroke:0.45px #221e1f">ANDERSON</div>
<div class="t" style="left:853.49px;top:1128.54px;font-size:15.6px;font-weight:400;color:#2f2b2b;transform:scaleX(0.9552);transform-origin:0 0;">1001 Brickell Bay Dr, Miami,...</div>
<div class="abs" style="left:1073.33px;top:1126.05px;width:41px;height:20.5px;border-radius:10px;background:#f1f1f1"></div>
<div class="t" style="left:1078.51px;top:1130.07px;font-size:13.8px;font-weight:400;color:#3a3636;transform:scaleX(1.0466);transform-origin:0 0;">GPB</div>
<div class="abs" style="left:1120.33px;top:1126.05px;width:40px;height:20.5px;border-radius:10px;background:#f1f1f1"></div>
<div class="t" style="left:1125.73px;top:1129.65px;font-size:14.3px;font-weight:400;color:#3a3636;transform:scaleX(1.0247);transform-origin:0 0;">ATR</div>
<div class="abs" style="left:1179.83px;top:1125.95px;width:5px;height:5px;border-radius:50%;background:#878585"></div>
<div class="abs" style="left:1179.83px;top:1133.95px;width:5px;height:5px;border-radius:50%;background:#878585"></div>
<div class="abs" style="left:1179.83px;top:1141.95px;width:5px;height:5px;border-radius:50%;background:#878585"></div>
<div class="abs" style="left:1187.83px;top:1125.95px;width:5px;height:5px;border-radius:50%;background:#878585"></div>
<div class="abs" style="left:1187.83px;top:1133.95px;width:5px;height:5px;border-radius:50%;background:#878585"></div>
<div class="abs" style="left:1187.83px;top:1141.95px;width:5px;height:5px;border-radius:50%;background:#878585"></div>
<div class="abs" style="left:662.33px;top:1177.80px;width:57px;height:21px;border-radius:11px;background:#e2fbf1"></div>
<div class="t" style="left:669.42px;top:1180.49px;font-size:15.6px;font-weight:400;color:#2f2b2b;transform:scaleX(1.0919);transform-origin:0 0;">05:00</div>
<div class="t" style="left:729.16px;top:1180.66px;font-size:15.4px;font-weight:400;color:#221e1f;transform:scaleX(0.9515);transform-origin:0 0;-webkit-text-stroke:0.45px #221e1f">BREAK</div>
<div class="abs" style="left:1179.83px;top:1177.90px;width:5px;height:5px;border-radius:50%;background:#878585"></div>
<div class="abs" style="left:1179.83px;top:1185.90px;width:5px;height:5px;border-radius:50%;background:#878585"></div>
<div class="abs" style="left:1179.83px;top:1193.90px;width:5px;height:5px;border-radius:50%;background:#878585"></div>
<div class="abs" style="left:1187.83px;top:1177.90px;width:5px;height:5px;border-radius:50%;background:#878585"></div>
<div class="abs" style="left:1187.83px;top:1185.90px;width:5px;height:5px;border-radius:50%;background:#878585"></div>
<div class="abs" style="left:1187.83px;top:1193.90px;width:5px;height:5px;border-radius:50%;background:#878585"></div>
<div class="abs" style="left:1253.66px;top:233px;width:581.33px;height:980.5px;border-radius:10px;background:#fff;box-shadow:0 0 0 1px #e9e9e9,0 0.5px 2px rgba(0,0,0,0.04);overflow:hidden">
<div class="abs" style="left:0;top:668px;width:582px;height:54px;background:#f3f3f3"></div>
<div class="abs" style="left:0;top:928px;width:582px;height:54px;background:#f3f3f3"></div>
</div>
<div class="abs" style="left:1253.66px;top:397px;width:581.33px;height:1px;background:#e6e6e6"></div>
<div class="abs" style="left:1253.66px;top:538px;width:581.33px;height:1px;background:#e7e7e7"></div>
<div class="abs" style="left:1253.66px;top:590px;width:581.33px;height:1px;background:#e7e7e7"></div>
<div class="abs" style="left:1253.66px;top:642px;width:581.33px;height:1px;background:#e7e7e7"></div>
<div class="abs" style="left:1253.66px;top:693px;width:581.33px;height:1px;background:#e7e7e7"></div>
<div class="abs" style="left:1253.66px;top:745px;width:581.33px;height:1px;background:#e7e7e7"></div>
<div class="abs" style="left:1253.66px;top:797px;width:581.33px;height:1px;background:#e7e7e7"></div>
<div class="abs" style="left:1253.66px;top:849px;width:581.33px;height:1px;background:#e7e7e7"></div>
<div class="abs" style="left:1253.66px;top:901px;width:581.33px;height:1px;background:#e7e7e7"></div>
<div class="abs" style="left:1253.66px;top:953px;width:581.33px;height:1px;background:#e7e7e7"></div>
<div class="abs" style="left:1253.66px;top:1005px;width:581.33px;height:1px;background:#e7e7e7"></div>
<div class="abs" style="left:1253.66px;top:1057px;width:581.33px;height:1px;background:#e7e7e7"></div>
<div class="abs" style="left:1253.66px;top:1109px;width:581.33px;height:1px;background:#e7e7e7"></div>
<div class="abs" style="left:1253.66px;top:1161px;width:581.33px;height:1px;background:#e7e7e7"></div>
<svg class="abs" style="left:1274.66px;top:253px" width="124" height="124" viewBox="0 0 124 124"><defs><clipPath id="pc2"><rect width="124" height="124" rx="5"/></clipPath><filter id="bl2" x="-20%" y="-20%" width="140%" height="140%"><feGaussianBlur stdDeviation="1.3"/></filter><filter id="bb2" x="-50%" y="-50%" width="200%" height="200%"><feGaussianBlur stdDeviation="5"/></filter></defs><g clip-path="url(#pc2)">
<rect width="124" height="124" fill="#8c8650"/>
<g filter="url(#bb2)">
<rect x="-10" y="-10" width="46" height="140" fill="#5e5238"/>
<ellipse cx="28" cy="40" rx="10" ry="18" fill="#767440"/>
<ellipse cx="55" cy="10" rx="22" ry="14" fill="#a4a052"/>
<ellipse cx="92" cy="45" rx="26" ry="44" fill="#dcc47a"/>
<ellipse cx="92" cy="26" rx="10" ry="12" fill="#f0e2b4"/>
<ellipse cx="80" cy="5" rx="10" ry="6" fill="#eee8d8"/>
<ellipse cx="98" cy="92" rx="14" ry="8" fill="#ead9a8"/>
<ellipse cx="16" cy="96" rx="18" ry="10" fill="#aea676"/>
<ellipse cx="12" cy="60" rx="10" ry="24" fill="#4a4030"/>
<rect x="118" y="0" width="10" height="124" fill="#a49a58"/>
</g>
<g filter="url(#bl2)">
<path d="M106 -2 H118 L117 40 L119 100 H109 L110 40 Z" fill="#3a3226"/>
<path d="M38 50 C32 26 46 12 62 13 C80 12 94 26 92 46 L88 62 C86 42 78 34 64 34 C50 34 44 42 42 60 Z" fill="#55423a"/>
<path d="M42 26 C46 14 64 10 74 18 C76 22 70 26 62 26 C54 26 48 30 44 36 Z" fill="#c49478"/>
<path d="M41 50 C41 36 50 30 64 30 C80 30 88 40 88 54 C88 76 80 92 64 93 C50 93 42 78 41 60 Z" fill="#bf8f78"/>
<path d="M48 55 C52 52 58 52 62 55" fill="none" stroke="#4a3028" stroke-width="2"/>
<path d="M68 54 C72 51 78 51 82 54" fill="none" stroke="#4a3028" stroke-width="2"/>
<path d="M42 70 C44 88 54 94 64 94 C76 94 84 86 86 70 C82 80 74 86 64 86 C54 86 46 80 42 70 Z" fill="#40302a"/>
<path d="M50 66 C56 62 72 62 78 66 L77 70 C70 67 58 67 51 70 Z" fill="#4a3028"/>
<path d="M54 70 C60 72 68 72 74 70 C70 75 58 75 54 70 Z" fill="#efe4da"/>
<path d="M48 90 L80 88 L82 112 L46 112 Z" fill="#b89080"/>
<path d="M0 124 L0 112 C14 102 32 94 46 90 C52 106 72 110 82 88 C98 96 114 102 124 106 L124 124 Z" fill="#2e2b29"/>
<g stroke="#9c968e" stroke-width="1.6" opacity="0.75">
<line x1="18" y1="104" x2="14" y2="124"/><line x1="34" y1="96" x2="31" y2="124"/><line x1="92" y1="96" x2="96" y2="124"/><line x1="108" y1="102" x2="111" y2="124"/>
<line x1="2" y1="114" x2="48" y2="104"/><line x1="80" y1="106" x2="124" y2="116"/><line x1="6" y1="122" x2="50" y2="114"/>
</g>
<path d="M54 110 L60 121 L66 110 Z" fill="#d0ccc4"/>
</g>
</g></svg>
<div class="t" style="left:1413.13px;top:261.27px;font-size:26.5px;font-weight:700;color:#221e1f;transform:scaleX(0.9626);transform-origin:0 0;">Hendra Huerta</div>
<div class="t" style="left:1414.79px;top:300.02px;font-size:18.4px;font-weight:400;color:#2f2b2b;transform:scaleX(1.0008);transform-origin:0 0;">Thursday 10/23/2025</div>
<div class="t" style="left:1414.64px;top:325.42px;font-size:18.4px;font-weight:400;color:#2f2b2b;transform:scaleX(0.9832);transform-origin:0 0;">Standard Routes</div>
<div class="t" style="left:1414.60px;top:351.42px;font-size:18.4px;font-weight:400;color:#2f2b2b;transform:scaleX(1.0326);transform-origin:0 0;">Office Staff | Operation</div>
<div class="t" style="left:1739.46px;top:300.19px;font-size:18.2px;font-weight:400;color:#2f2b2b;transform:scaleX(0.9759);transform-origin:0 0;">Appts: 13</div>
<div class="t" style="left:1742.72px;top:325.59px;font-size:18.2px;font-weight:400;color:#2f2b2b;transform:scaleX(1.0123);transform-origin:0 0;">5.6/8 hrs</div>
<div class="t" style="left:1731.53px;top:351.59px;font-size:18.2px;font-weight:400;color:#2f2b2b;transform:scaleX(0.9334);transform-origin:0 0;">ID: 147331</div>
<div class="t" style="left:1275.16px;top:421.56px;font-size:18px;font-weight:700;color:#2f2b2b;transform:scaleX(0.7095);transform-origin:0 0;">11</div>
<div class="t" style="left:1295.46px;top:421.56px;font-size:18px;font-weight:400;color:#2f2b2b;transform:scaleX(1.0018);transform-origin:0 0;">stops</div>
<div class="t" style="left:1372.86px;top:421.56px;font-size:18px;font-weight:700;color:#2f2b2b;transform:scaleX(0.8841);transform-origin:0 0;">14</div>
<div class="t" style="left:1396.56px;top:421.56px;font-size:18px;font-weight:400;color:#2f2b2b;transform:scaleX(0.9547);transform-origin:0 0;">miles</div>
<div class="t" style="left:1470.66px;top:421.56px;font-size:18px;font-weight:700;color:#2f2b2b;transform:scaleX(0.9590);transform-origin:0 0;">6</div>
<div class="t" style="left:1482.46px;top:421.56px;font-size:18px;font-weight:400;color:#2f2b2b;transform:scaleX(0.7492);transform-origin:0 0;">h</div>
<div class="t" style="left:1496.66px;top:421.56px;font-size:18px;font-weight:700;color:#2f2b2b;transform:scaleX(0.8990);transform-origin:0 0;">27</div>
<div class="t" style="left:1516.26px;top:421.56px;font-size:18px;font-weight:400;color:#2f2b2b;transform:scaleX(0.9737);transform-origin:0 0;">m</div>
<div class="abs" style="left:1353.5600000000002px;top:429.5px;width:4px;height:4px;border-radius:50%;background:#2f2b2b"></div>
<div class="abs" style="left:1451.96px;top:429.5px;width:4px;height:4px;border-radius:50%;background:#2f2b2b"></div>
<div class="abs" style="left:1274.66px;top:461px;width:539px;height:57px;border-radius:8px;background:#221e1f"></div>
<div class="t" style="left:1451.14px;top:480.40px;font-size:20.2px;font-weight:700;color:#fff;transform:scaleX(1.0129);transform-origin:0 0;">Optimize Route</div>
<svg width="27.00" height="33.00" viewBox="0 0 27 33" style="position:absolute;left:1624.66px;top:473.00px"><g fill="none" stroke="#fff" stroke-width="3" stroke-linecap="round">
<path d="M13.3 7.8 A8.7 8.7 0 0 1 21.4 20.2"/><path d="M5.7 12.7 A8.7 8.7 0 0 0 13.7 25.2"/></g>
<path d="M12.6 3.1 L12.6 11.9 L8.2 7.5 Z" fill="#fff" stroke="#fff" stroke-width="0.7" stroke-linejoin="round"/>
<path d="M13.5 21.3 L13.5 30 L18.1 25.65 Z" fill="#fff" stroke="#fff" stroke-width="0.7" stroke-linejoin="round"/>
</svg>
<div class="abs" style="left:1274.66px;top:554.40px;width:57px;height:21px;border-radius:11px;background:#e2fbf1"></div>
<div class="t" style="left:1281.14px;top:557.09px;font-size:15.6px;font-weight:400;color:#2f2b2b;transform:scaleX(1.1209);transform-origin:0 0;">08:00</div>
<div class="t" style="left:1341.47px;top:557.26px;font-size:15.4px;font-weight:400;color:#221e1f;transform:scaleX(0.9659);transform-origin:0 0;-webkit-text-stroke:0.45px #221e1f">RODRIGUEZ</div>
<div class="t" style="left:1466.11px;top:557.09px;font-size:15.6px;font-weight:400;color:#2f2b2b;transform:scaleX(0.9605);transform-origin:0 0;">22 NW 1st Ave, Miami, FL 33...</div>
<div class="abs" style="left:1685.66px;top:554.60px;width:41px;height:20.5px;border-radius:10px;background:#f1f1f1"></div>
<div class="t" style="left:1690.84px;top:558.62px;font-size:13.8px;font-weight:400;color:#3a3636;transform:scaleX(1.0466);transform-origin:0 0;">GPB</div>
<div class="abs" style="left:1732.66px;top:554.60px;width:40px;height:20.5px;border-radius:10px;background:#f1f1f1"></div>
<div class="t" style="left:1738.06px;top:558.20px;font-size:14.3px;font-weight:400;color:#3a3636;transform:scaleX(1.0247);transform-origin:0 0;">ATR</div>
<div class="abs" style="left:1792.16px;top:554.50px;width:5px;height:5px;border-radius:50%;background:#878585"></div>
<div class="abs" style="left:1792.16px;top:562.50px;width:5px;height:5px;border-radius:50%;background:#878585"></div>
<div class="abs" style="left:1792.16px;top:570.50px;width:5px;height:5px;border-radius:50%;background:#878585"></div>
<div class="abs" style="left:1800.16px;top:554.50px;width:5px;height:5px;border-radius:50%;background:#878585"></div>
<div class="abs" style="left:1800.16px;top:562.50px;width:5px;height:5px;border-radius:50%;background:#878585"></div>
<div class="abs" style="left:1800.16px;top:570.50px;width:5px;height:5px;border-radius:50%;background:#878585"></div>
<div class="abs" style="left:1274.66px;top:606.35px;width:57px;height:21px;border-radius:11px;background:#e2fbf1"></div>
<div class="t" style="left:1281.85px;top:609.04px;font-size:15.6px;font-weight:400;color:#2f2b2b;transform:scaleX(1.0814);transform-origin:0 0;">08:30</div>
<div class="t" style="left:1342.50px;top:609.21px;font-size:15.4px;font-weight:400;color:#221e1f;transform:scaleX(1.0102);transform-origin:0 0;-webkit-text-stroke:0.45px #221e1f">JACKSON</div>
<div class="t" style="left:1465.80px;top:609.04px;font-size:15.6px;font-weight:400;color:#2f2b2b;transform:scaleX(0.9695);transform-origin:0 0;">1600 Biscayne Blvd, Miami,...</div>
<div class="abs" style="left:1685.66px;top:606.55px;width:41px;height:20.5px;border-radius:10px;background:#f1f1f1"></div>
<div class="t" style="left:1690.84px;top:610.57px;font-size:13.8px;font-weight:400;color:#3a3636;transform:scaleX(1.0466);transform-origin:0 0;">GPB</div>
<div class="abs" style="left:1732.66px;top:606.55px;width:40px;height:20.5px;border-radius:10px;background:#f1f1f1"></div>
<div class="t" style="left:1738.06px;top:610.15px;font-size:14.3px;font-weight:400;color:#3a3636;transform:scaleX(1.0247);transform-origin:0 0;">ATR</div>
<div class="abs" style="left:1792.16px;top:606.45px;width:5px;height:5px;border-radius:50%;background:#878585"></div>
<div class="abs" style="left:1792.16px;top:614.45px;width:5px;height:5px;border-radius:50%;background:#878585"></div>
<div class="abs" style="left:1792.16px;top:622.45px;width:5px;height:5px;border-radius:50%;background:#878585"></div>
<div class="abs" style="left:1800.16px;top:606.45px;width:5px;height:5px;border-radius:50%;background:#878585"></div>
<div class="abs" style="left:1800.16px;top:614.45px;width:5px;height:5px;border-radius:50%;background:#878585"></div>
<div class="abs" style="left:1800.16px;top:622.45px;width:5px;height:5px;border-radius:50%;background:#878585"></div>
<div class="abs" style="left:1274.66px;top:658.30px;width:57px;height:21px;border-radius:11px;background:#e2fbf1"></div>
<div class="t" style="left:1281.55px;top:660.99px;font-size:15.6px;font-weight:400;color:#2f2b2b;transform:scaleX(1.0893);transform-origin:0 0;">09:00</div>
<div class="t" style="left:1342.50px;top:661.16px;font-size:15.4px;font-weight:400;color:#221e1f;transform:scaleX(1.0320);transform-origin:0 0;-webkit-text-stroke:0.45px #221e1f">JOHNSON</div>
<div class="t" style="left:1465.83px;top:660.99px;font-size:15.6px;font-weight:400;color:#2f2b2b;transform:scaleX(0.9454);transform-origin:0 0;">111 SW 5th Ave, Miami, FL 3...</div>
<div class="abs" style="left:1685.66px;top:658.50px;width:41px;height:20.5px;border-radius:10px;background:#f1f1f1"></div>
<div class="t" style="left:1690.84px;top:662.52px;font-size:13.8px;font-weight:400;color:#3a3636;transform:scaleX(1.0466);transform-origin:0 0;">GPB</div>
<div class="abs" style="left:1732.66px;top:658.50px;width:40px;height:20.5px;border-radius:10px;background:#f1f1f1"></div>
<div class="t" style="left:1738.06px;top:662.10px;font-size:14.3px;font-weight:400;color:#3a3636;transform:scaleX(1.0247);transform-origin:0 0;">ATR</div>
<div class="abs" style="left:1792.16px;top:658.40px;width:5px;height:5px;border-radius:50%;background:#878585"></div>
<div class="abs" style="left:1792.16px;top:666.40px;width:5px;height:5px;border-radius:50%;background:#878585"></div>
<div class="abs" style="left:1792.16px;top:674.40px;width:5px;height:5px;border-radius:50%;background:#878585"></div>
<div class="abs" style="left:1800.16px;top:658.40px;width:5px;height:5px;border-radius:50%;background:#878585"></div>
<div class="abs" style="left:1800.16px;top:666.40px;width:5px;height:5px;border-radius:50%;background:#878585"></div>
<div class="abs" style="left:1800.16px;top:674.40px;width:5px;height:5px;border-radius:50%;background:#878585"></div>
<div class="abs" style="left:1274.66px;top:710.25px;width:57px;height:21px;border-radius:11px;background:#e2fbf1"></div>
<div class="t" style="left:1282.37px;top:712.94px;font-size:15.6px;font-weight:400;color:#2f2b2b;transform:scaleX(1.0551);transform-origin:0 0;">09:30</div>
<div class="t" style="left:1342.66px;top:713.11px;font-size:15.4px;font-weight:400;color:#221e1f;transform:scaleX(0.9942);transform-origin:0 0;-webkit-text-stroke:0.45px #221e1f">WILLIAMS</div>
<div class="t" style="left:1466.09px;top:712.94px;font-size:15.6px;font-weight:400;color:#2f2b2b;transform:scaleX(0.9868);transform-origin:0 0;">2650 NW 5th Ave, Miami, FL...</div>
<div class="abs" style="left:1685.66px;top:710.45px;width:41px;height:20.5px;border-radius:10px;background:#f1f1f1"></div>
<div class="t" style="left:1690.84px;top:714.47px;font-size:13.8px;font-weight:400;color:#3a3636;transform:scaleX(1.0466);transform-origin:0 0;">GPB</div>
<div class="abs" style="left:1732.66px;top:710.45px;width:40px;height:20.5px;border-radius:10px;background:#f1f1f1"></div>
<div class="t" style="left:1738.06px;top:714.05px;font-size:14.3px;font-weight:400;color:#3a3636;transform:scaleX(1.0247);transform-origin:0 0;">ATR</div>
<div class="abs" style="left:1792.16px;top:710.35px;width:5px;height:5px;border-radius:50%;background:#878585"></div>
<div class="abs" style="left:1792.16px;top:718.35px;width:5px;height:5px;border-radius:50%;background:#878585"></div>
<div class="abs" style="left:1792.16px;top:726.35px;width:5px;height:5px;border-radius:50%;background:#878585"></div>
<div class="abs" style="left:1800.16px;top:710.35px;width:5px;height:5px;border-radius:50%;background:#878585"></div>
<div class="abs" style="left:1800.16px;top:718.35px;width:5px;height:5px;border-radius:50%;background:#878585"></div>
<div class="abs" style="left:1800.16px;top:726.35px;width:5px;height:5px;border-radius:50%;background:#878585"></div>
<div class="abs" style="left:1274.66px;top:762.20px;width:57px;height:21px;border-radius:11px;background:#e2fbf1"></div>
<div class="t" style="left:1282.51px;top:764.89px;font-size:15.6px;font-weight:400;color:#2f2b2b;transform:scaleX(1.0486);transform-origin:0 0;">10:00</div>
<div class="t" style="left:1341.42px;top:765.06px;font-size:15.4px;font-weight:400;color:#221e1f;transform:scaleX(1.0073);transform-origin:0 0;-webkit-text-stroke:0.45px #221e1f">BROWN</div>
<div class="t" style="left:1465.82px;top:764.89px;font-size:15.6px;font-weight:400;color:#2f2b2b;transform:scaleX(0.9552);transform-origin:0 0;">1001 Brickell Bay Dr, Miami,...</div>
<div class="abs" style="left:1685.66px;top:762.40px;width:41px;height:20.5px;border-radius:10px;background:#f1f1f1"></div>
<div class="t" style="left:1690.84px;top:766.42px;font-size:13.8px;font-weight:400;color:#3a3636;transform:scaleX(1.0466);transform-origin:0 0;">GPB</div>
<div class="abs" style="left:1732.66px;top:762.40px;width:40px;height:20.5px;border-radius:10px;background:#f1f1f1"></div>
<div class="t" style="left:1738.06px;top:766.00px;font-size:14.3px;font-weight:400;color:#3a3636;transform:scaleX(1.0247);transform-origin:0 0;">ATR</div>
<div class="abs" style="left:1792.16px;top:762.30px;width:5px;height:5px;border-radius:50%;background:#878585"></div>
<div class="abs" style="left:1792.16px;top:770.30px;width:5px;height:5px;border-radius:50%;background:#878585"></div>
<div class="abs" style="left:1792.16px;top:778.30px;width:5px;height:5px;border-radius:50%;background:#878585"></div>
<div class="abs" style="left:1800.16px;top:762.30px;width:5px;height:5px;border-radius:50%;background:#878585"></div>
<div class="abs" style="left:1800.16px;top:770.30px;width:5px;height:5px;border-radius:50%;background:#878585"></div>
<div class="abs" style="left:1800.16px;top:778.30px;width:5px;height:5px;border-radius:50%;background:#878585"></div>
<div class="abs" style="left:1274.66px;top:814.15px;width:57px;height:21px;border-radius:11px;background:#e2fbf1"></div>
<div class="t" style="left:1283.26px;top:816.84px;font-size:15.6px;font-weight:400;color:#2f2b2b;transform:scaleX(1.0032);transform-origin:0 0;">10:30</div>
<div class="t" style="left:1341.41px;top:817.01px;font-size:15.4px;font-weight:400;color:#221e1f;transform:scaleX(1.0169);transform-origin:0 0;-webkit-text-stroke:0.45px #221e1f">DAVIS</div>
<div class="t" style="left:1466.41px;top:816.84px;font-size:15.6px;font-weight:400;color:#2f2b2b;transform:scaleX(0.9596);transform-origin:0 0;">3250 NE 1st Ave, Miami, FL...</div>
<div class="abs" style="left:1685.66px;top:814.35px;width:41px;height:20.5px;border-radius:10px;background:#f1f1f1"></div>
<div class="t" style="left:1690.84px;top:818.37px;font-size:13.8px;font-weight:400;color:#3a3636;transform:scaleX(1.0466);transform-origin:0 0;">GPB</div>
<div class="abs" style="left:1732.66px;top:814.35px;width:40px;height:20.5px;border-radius:10px;background:#f1f1f1"></div>
<div class="t" style="left:1738.06px;top:817.95px;font-size:14.3px;font-weight:400;color:#3a3636;transform:scaleX(1.0247);transform-origin:0 0;">ATR</div>
<div class="abs" style="left:1792.16px;top:814.25px;width:5px;height:5px;border-radius:50%;background:#878585"></div>
<div class="abs" style="left:1792.16px;top:822.25px;width:5px;height:5px;border-radius:50%;background:#878585"></div>
<div class="abs" style="left:1792.16px;top:830.25px;width:5px;height:5px;border-radius:50%;background:#878585"></div>
<div class="abs" style="left:1800.16px;top:814.25px;width:5px;height:5px;border-radius:50%;background:#878585"></div>
<div class="abs" style="left:1800.16px;top:822.25px;width:5px;height:5px;border-radius:50%;background:#878585"></div>
<div class="abs" style="left:1800.16px;top:830.25px;width:5px;height:5px;border-radius:50%;background:#878585"></div>
<div class="abs" style="left:1274.66px;top:866.10px;width:57px;height:21px;border-radius:11px;background:#e2fbf1"></div>
<div class="t" style="left:1284.10px;top:868.79px;font-size:15.6px;font-weight:400;color:#2f2b2b;transform:scaleX(0.9745);transform-origin:0 0;">11:00</div>
<div class="t" style="left:1341.47px;top:868.96px;font-size:15.4px;font-weight:400;color:#221e1f;transform:scaleX(0.9619);transform-origin:0 0;-webkit-text-stroke:0.45px #221e1f">MILLER</div>
<div class="t" style="left:1465.82px;top:868.79px;font-size:15.6px;font-weight:400;color:#2f2b2b;transform:scaleX(0.9542);transform-origin:0 0;">1133 NW 2nd St, Miami, FL 3...</div>
<div class="abs" style="left:1685.66px;top:866.30px;width:41px;height:20.5px;border-radius:10px;background:#f1f1f1"></div>
<div class="t" style="left:1690.84px;top:870.32px;font-size:13.8px;font-weight:400;color:#3a3636;transform:scaleX(1.0466);transform-origin:0 0;">GPB</div>
<div class="abs" style="left:1732.66px;top:866.30px;width:40px;height:20.5px;border-radius:10px;background:#f1f1f1"></div>
<div class="t" style="left:1738.06px;top:869.90px;font-size:14.3px;font-weight:400;color:#3a3636;transform:scaleX(1.0247);transform-origin:0 0;">ATR</div>
<div class="abs" style="left:1792.16px;top:866.20px;width:5px;height:5px;border-radius:50%;background:#878585"></div>
<div class="abs" style="left:1792.16px;top:874.20px;width:5px;height:5px;border-radius:50%;background:#878585"></div>
<div class="abs" style="left:1792.16px;top:882.20px;width:5px;height:5px;border-radius:50%;background:#878585"></div>
<div class="abs" style="left:1800.16px;top:866.20px;width:5px;height:5px;border-radius:50%;background:#878585"></div>
<div class="abs" style="left:1800.16px;top:874.20px;width:5px;height:5px;border-radius:50%;background:#878585"></div>
<div class="abs" style="left:1800.16px;top:882.20px;width:5px;height:5px;border-radius:50%;background:#878585"></div>
<div class="abs" style="left:1274.66px;top:918.05px;width:57px;height:21px;border-radius:11px;background:#e2fbf1"></div>
<div class="t" style="left:1282.85px;top:920.74px;font-size:15.6px;font-weight:400;color:#2f2b2b;transform:scaleX(1.0139);transform-origin:0 0;">12:00</div>
<div class="t" style="left:1341.38px;top:920.91px;font-size:15.4px;font-weight:400;color:#221e1f;transform:scaleX(1.0413);transform-origin:0 0;-webkit-text-stroke:0.45px #221e1f">LUNCH</div>
<div class="abs" style="left:1792.16px;top:918.15px;width:5px;height:5px;border-radius:50%;background:#878585"></div>
<div class="abs" style="left:1792.16px;top:926.15px;width:5px;height:5px;border-radius:50%;background:#878585"></div>
<div class="abs" style="left:1792.16px;top:934.15px;width:5px;height:5px;border-radius:50%;background:#878585"></div>
<div class="abs" style="left:1800.16px;top:918.15px;width:5px;height:5px;border-radius:50%;background:#878585"></div>
<div class="abs" style="left:1800.16px;top:926.15px;width:5px;height:5px;border-radius:50%;background:#878585"></div>
<div class="abs" style="left:1800.16px;top:934.15px;width:5px;height:5px;border-radius:50%;background:#878585"></div>
<div class="abs" style="left:1274.66px;top:970.00px;width:57px;height:21px;border-radius:11px;background:#e2fbf1"></div>
<div class="t" style="left:1283.08px;top:972.69px;font-size:15.6px;font-weight:400;color:#2f2b2b;transform:scaleX(1.0340);transform-origin:0 0;">01:00</div>
<div class="t" style="left:1342.66px;top:972.86px;font-size:15.4px;font-weight:400;color:#221e1f;transform:scaleX(1.0061);transform-origin:0 0;-webkit-text-stroke:0.45px #221e1f">WILSON</div>
<div class="t" style="left:1465.80px;top:972.69px;font-size:15.6px;font-weight:400;color:#2f2b2b;transform:scaleX(0.9695);transform-origin:0 0;">1600 Biscayne Blvd, Miami,...</div>
<div class="abs" style="left:1685.66px;top:970.20px;width:41px;height:20.5px;border-radius:10px;background:#f1f1f1"></div>
<div class="t" style="left:1690.84px;top:974.22px;font-size:13.8px;font-weight:400;color:#3a3636;transform:scaleX(1.0466);transform-origin:0 0;">GPB</div>
<div class="abs" style="left:1732.66px;top:970.20px;width:40px;height:20.5px;border-radius:10px;background:#f1f1f1"></div>
<div class="t" style="left:1738.06px;top:973.80px;font-size:14.3px;font-weight:400;color:#3a3636;transform:scaleX(1.0247);transform-origin:0 0;">ATR</div>
<div class="abs" style="left:1792.16px;top:970.10px;width:5px;height:5px;border-radius:50%;background:#878585"></div>
<div class="abs" style="left:1792.16px;top:978.10px;width:5px;height:5px;border-radius:50%;background:#878585"></div>
<div class="abs" style="left:1792.16px;top:986.10px;width:5px;height:5px;border-radius:50%;background:#878585"></div>
<div class="abs" style="left:1800.16px;top:970.10px;width:5px;height:5px;border-radius:50%;background:#878585"></div>
<div class="abs" style="left:1800.16px;top:978.10px;width:5px;height:5px;border-radius:50%;background:#878585"></div>
<div class="abs" style="left:1800.16px;top:986.10px;width:5px;height:5px;border-radius:50%;background:#878585"></div>
<div class="abs" style="left:1274.66px;top:1021.95px;width:57px;height:21px;border-radius:11px;background:#e2fbf1"></div>
<div class="t" style="left:1281.75px;top:1024.64px;font-size:15.6px;font-weight:400;color:#2f2b2b;transform:scaleX(1.0919);transform-origin:0 0;">02:00</div>
<div class="t" style="left:1341.45px;top:1024.81px;font-size:15.4px;font-weight:400;color:#221e1f;transform:scaleX(0.9791);transform-origin:0 0;-webkit-text-stroke:0.45px #221e1f">MOORE</div>
<div class="t" style="left:1465.83px;top:1024.64px;font-size:15.6px;font-weight:400;color:#2f2b2b;transform:scaleX(0.9454);transform-origin:0 0;">111 SW 5th Ave, Miami, FL 3...</div>
<div class="abs" style="left:1685.66px;top:1022.15px;width:41px;height:20.5px;border-radius:10px;background:#f1f1f1"></div>
<div class="t" style="left:1690.84px;top:1026.17px;font-size:13.8px;font-weight:400;color:#3a3636;transform:scaleX(1.0466);transform-origin:0 0;">GPB</div>
<div class="abs" style="left:1732.66px;top:1022.15px;width:40px;height:20.5px;border-radius:10px;background:#f1f1f1"></div>
<div class="t" style="left:1738.06px;top:1025.75px;font-size:14.3px;font-weight:400;color:#3a3636;transform:scaleX(1.0247);transform-origin:0 0;">ATR</div>
<div class="abs" style="left:1792.16px;top:1022.05px;width:5px;height:5px;border-radius:50%;background:#878585"></div>
<div class="abs" style="left:1792.16px;top:1030.05px;width:5px;height:5px;border-radius:50%;background:#878585"></div>
<div class="abs" style="left:1792.16px;top:1038.05px;width:5px;height:5px;border-radius:50%;background:#878585"></div>
<div class="abs" style="left:1800.16px;top:1022.05px;width:5px;height:5px;border-radius:50%;background:#878585"></div>
<div class="abs" style="left:1800.16px;top:1030.05px;width:5px;height:5px;border-radius:50%;background:#878585"></div>
<div class="abs" style="left:1800.16px;top:1038.05px;width:5px;height:5px;border-radius:50%;background:#878585"></div>
<div class="abs" style="left:1274.66px;top:1073.90px;width:57px;height:21px;border-radius:11px;background:#e2fbf1"></div>
<div class="t" style="left:1281.75px;top:1076.59px;font-size:15.6px;font-weight:400;color:#2f2b2b;transform:scaleX(1.0919);transform-origin:0 0;">03:00</div>
<div class="t" style="left:1342.36px;top:1076.76px;font-size:15.4px;font-weight:400;color:#221e1f;transform:scaleX(0.9714);transform-origin:0 0;-webkit-text-stroke:0.45px #221e1f">TAYLOR</div>
<div class="t" style="left:1466.09px;top:1076.59px;font-size:15.6px;font-weight:400;color:#2f2b2b;transform:scaleX(0.9868);transform-origin:0 0;">2650 NW 5th Ave, Miami, FL...</div>
<div class="abs" style="left:1685.66px;top:1074.10px;width:41px;height:20.5px;border-radius:10px;background:#f1f1f1"></div>
<div class="t" style="left:1690.84px;top:1078.12px;font-size:13.8px;font-weight:400;color:#3a3636;transform:scaleX(1.0466);transform-origin:0 0;">GPB</div>
<div class="abs" style="left:1732.66px;top:1074.10px;width:40px;height:20.5px;border-radius:10px;background:#f1f1f1"></div>
<div class="t" style="left:1738.06px;top:1077.70px;font-size:14.3px;font-weight:400;color:#3a3636;transform:scaleX(1.0247);transform-origin:0 0;">ATR</div>
<div class="abs" style="left:1792.16px;top:1074.00px;width:5px;height:5px;border-radius:50%;background:#878585"></div>
<div class="abs" style="left:1792.16px;top:1082.00px;width:5px;height:5px;border-radius:50%;background:#878585"></div>
<div class="abs" style="left:1792.16px;top:1090.00px;width:5px;height:5px;border-radius:50%;background:#878585"></div>
<div class="abs" style="left:1800.16px;top:1074.00px;width:5px;height:5px;border-radius:50%;background:#878585"></div>
<div class="abs" style="left:1800.16px;top:1082.00px;width:5px;height:5px;border-radius:50%;background:#878585"></div>
<div class="abs" style="left:1800.16px;top:1090.00px;width:5px;height:5px;border-radius:50%;background:#878585"></div>
<div class="abs" style="left:1274.66px;top:1125.85px;width:57px;height:21px;border-radius:11px;background:#e2fbf1"></div>
<div class="t" style="left:1281.13px;top:1128.54px;font-size:15.6px;font-weight:400;color:#2f2b2b;transform:scaleX(1.1288);transform-origin:0 0;">04:00</div>
<div class="t" style="left:1342.66px;top:1128.71px;font-size:15.4px;font-weight:400;color:#221e1f;transform:scaleX(0.9876);transform-origin:0 0;-webkit-text-stroke:0.45px #221e1f">ANDERSON</div>
<div class="t" style="left:1465.82px;top:1128.54px;font-size:15.6px;font-weight:400;color:#2f2b2b;transform:scaleX(0.9552);transform-origin:0 0;">1001 Brickell Bay Dr, Miami,...</div>
<div class="abs" style="left:1685.66px;top:1126.05px;width:41px;height:20.5px;border-radius:10px;background:#f1f1f1"></div>
<div class="t" style="left:1690.84px;top:1130.07px;font-size:13.8px;font-weight:400;color:#3a3636;transform:scaleX(1.0466);transform-origin:0 0;">GPB</div>
<div class="abs" style="left:1732.66px;top:1126.05px;width:40px;height:20.5px;border-radius:10px;background:#f1f1f1"></div>
<div class="t" style="left:1738.06px;top:1129.65px;font-size:14.3px;font-weight:400;color:#3a3636;transform:scaleX(1.0247);transform-origin:0 0;">ATR</div>
<div class="abs" style="left:1792.16px;top:1125.95px;width:5px;height:5px;border-radius:50%;background:#878585"></div>
<div class="abs" style="left:1792.16px;top:1133.95px;width:5px;height:5px;border-radius:50%;background:#878585"></div>
<div class="abs" style="left:1792.16px;top:1141.95px;width:5px;height:5px;border-radius:50%;background:#878585"></div>
<div class="abs" style="left:1800.16px;top:1125.95px;width:5px;height:5px;border-radius:50%;background:#878585"></div>
<div class="abs" style="left:1800.16px;top:1133.95px;width:5px;height:5px;border-radius:50%;background:#878585"></div>
<div class="abs" style="left:1800.16px;top:1141.95px;width:5px;height:5px;border-radius:50%;background:#878585"></div>
<div class="abs" style="left:1274.66px;top:1177.80px;width:57px;height:21px;border-radius:11px;background:#e2fbf1"></div>
<div class="t" style="left:1281.75px;top:1180.49px;font-size:15.6px;font-weight:400;color:#2f2b2b;transform:scaleX(1.0919);transform-origin:0 0;">05:00</div>
<div class="t" style="left:1341.49px;top:1180.66px;font-size:15.4px;font-weight:400;color:#221e1f;transform:scaleX(0.9515);transform-origin:0 0;-webkit-text-stroke:0.45px #221e1f">BREAK</div>
<div class="abs" style="left:1792.16px;top:1177.90px;width:5px;height:5px;border-radius:50%;background:#878585"></div>
<div class="abs" style="left:1792.16px;top:1185.90px;width:5px;height:5px;border-radius:50%;background:#878585"></div>
<div class="abs" style="left:1792.16px;top:1193.90px;width:5px;height:5px;border-radius:50%;background:#878585"></div>
<div class="abs" style="left:1800.16px;top:1177.90px;width:5px;height:5px;border-radius:50%;background:#878585"></div>
<div class="abs" style="left:1800.16px;top:1185.90px;width:5px;height:5px;border-radius:50%;background:#878585"></div>
<div class="abs" style="left:1800.16px;top:1193.90px;width:5px;height:5px;border-radius:50%;background:#878585"></div>
<div class="abs" style="left:3px;top:1233px;width:1858px;height:1px;background:#e4e4e4"></div>
<div class="abs" style="left:1171px;top:1250px;width:323px;height:56px;border-radius:8px;background:#221e1f"></div>
<div class="t" style="left:1202.20px;top:1270.04px;font-size:19.8px;font-weight:700;color:#fff;transform:scaleX(1.0128);transform-origin:0 0;">Optimize Group Routes</div>
<svg width="27.00" height="33.00" viewBox="0 0 27 33" style="position:absolute;left:1449.30px;top:1261.80px"><g fill="none" stroke="#fff" stroke-width="3" stroke-linecap="round">
<path d="M13.3 7.8 A8.7 8.7 0 0 1 21.4 20.2"/><path d="M5.7 12.7 A8.7 8.7 0 0 0 13.7 25.2"/></g>
<path d="M12.6 3.1 L12.6 11.9 L8.2 7.5 Z" fill="#fff" stroke="#fff" stroke-width="0.7" stroke-linejoin="round"/>
<path d="M13.5 21.3 L13.5 30 L18.1 25.65 Z" fill="#fff" stroke="#fff" stroke-width="0.7" stroke-linejoin="round"/>
</svg>
<div class="abs" style="left:1515px;top:1250px;width:330px;height:56px;border-radius:8px;background:#c2f2d6"></div>
<div class="t" style="left:1544.61px;top:1270.12px;font-size:19.7px;font-weight:700;color:#ffffff;transform:scaleX(1.0094);transform-origin:0 0;">Dispatch to Field Routes</div>
<svg class="abs" style="left:1798px;top:1267px" width="32" height="24" viewBox="0 0 32 24">
<rect x="3.5" y="0.5" width="25.5" height="17" rx="1" fill="#fff"/><rect x="1" y="17.5" width="30" height="3" fill="#fff"/>
<path d="M9.5 13 C10.5 8.5 14 7 18 7 V4 L23 8.8 L18 13.2 V10.2 C14.5 10.2 11.5 11 9.5 13 Z" fill="#c2f2d6"/></svg>
</body></html>
